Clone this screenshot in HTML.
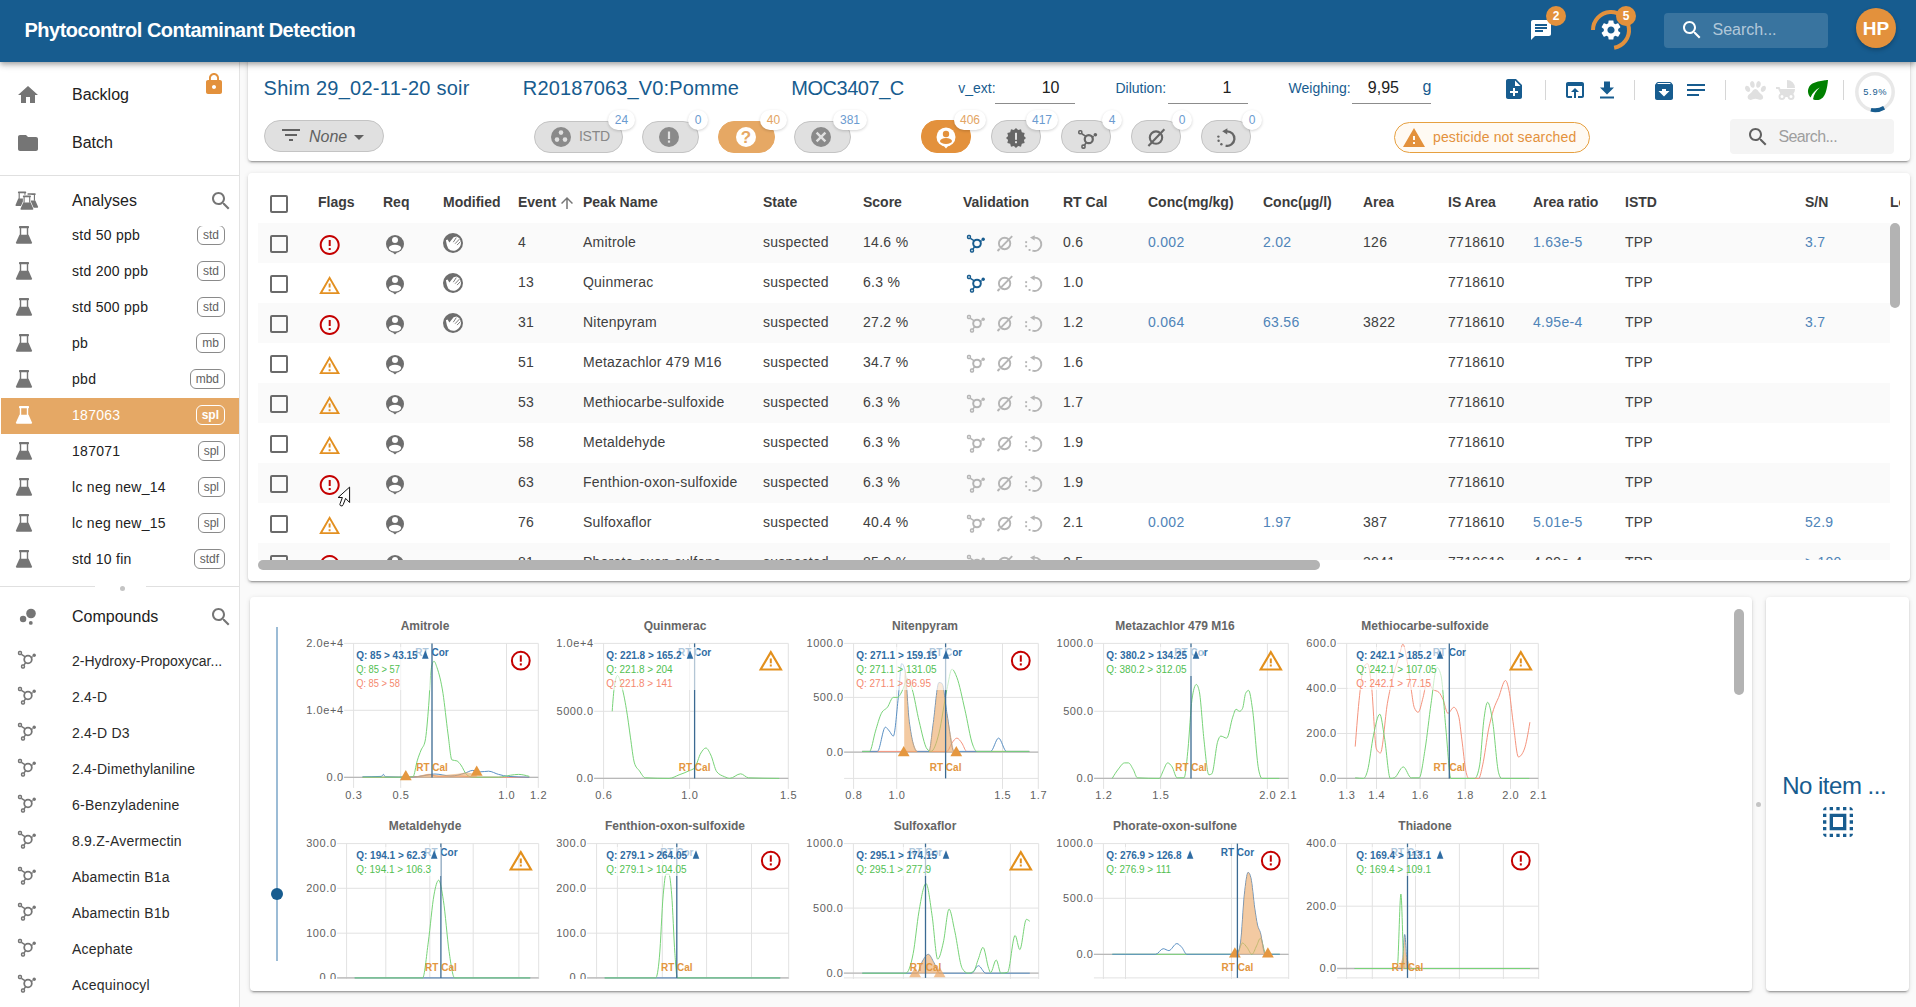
<!DOCTYPE html><html><head><meta charset="utf-8"><style>
*{box-sizing:border-box;margin:0;padding:0}
html,body{-webkit-font-smoothing:antialiased;width:1916px;height:1007px;overflow:hidden;background:#fafafa;font-family:"Liberation Sans",sans-serif;color:#212121}
.a{position:absolute}
.t{position:absolute;white-space:nowrap;line-height:1}
svg{position:absolute;overflow:visible}
.card{position:absolute;background:#fff;border-radius:4px;box-shadow:0 3px 1px -2px rgba(0,0,0,.2),0 2px 2px 0 rgba(0,0,0,.14),0 1px 5px 0 rgba(0,0,0,.12)}
.chip{position:absolute;height:20px;border:1px solid #8a8a8a;border-radius:6px;font-size:12px;line-height:18px;color:#616161;padding:0 5px;white-space:nowrap}
.pill{position:absolute;height:32px;border-radius:16px;background:#e0e0e0;border:1px solid #c4c4c4}
.badge{position:absolute;height:20px;min-width:20px;border-radius:10px;background:#fff;box-shadow:0 1px 3px rgba(0,0,0,.18);font-size:12px;line-height:20px;text-align:center;color:#6b9bd0;padding:0 6px}
</style></head><body>
<div class="card" style="left:248px;top:50px;width:1662px;height:111px"></div>
<div class="card" style="left:248px;top:173px;width:1662px;height:408px"></div>
<div class="card" style="left:250px;top:597px;width:1502px;height:394px"></div>
<div class="card" style="left:1766px;top:597px;width:143px;height:394px"></div>
<div class="a" style="left:0;top:62px;width:240px;height:945px;background:#fff;border-right:1px solid #e3e3e3"></div>
<svg style="left:16px;top:83px;" width="24" height="24" viewBox="0 0 24 24"><path fill="#757575" d="M10 20v-6h4v6h5v-8h3L12 3 2 12h3v8z"/></svg>
<div class="t" style="left:72.0px;top:87.36px;font-size:16px;color:#212121;font-weight:normal;">Backlog</div>
<svg style="left:16px;top:131px;" width="24" height="24" viewBox="0 0 24 24"><path fill="#757575" d="M10 4H4c-1.1 0-1.99.9-1.99 2L2 18c0 1.1.9 2 2 2h16c1.1 0 2-.9 2-2V8c0-1.1-.9-2-2-2h-8l-2-2z"/></svg>
<div class="t" style="left:72.0px;top:135.16px;font-size:16px;color:#212121;font-weight:normal;">Batch</div>
<svg style="left:202px;top:72px;" width="24" height="24" viewBox="0 0 24 24"><path fill="#e3913c" d="M18 8h-1V6c0-2.76-2.24-5-5-5S7 3.24 7 6v2H6c-1.1 0-2 .9-2 2v10c0 1.1.9 2 2 2h12c1.1 0 2-.9 2-2V10c0-1.1-.9-2-2-2zm-6 9c-1.1 0-2-.9-2-2s.9-2 2-2 2 .9 2 2-.9 2-2 2zm3.1-9H8.9V6c0-1.71 1.39-3.1 3.1-3.1 1.71 0 3.1 1.39 3.1 3.1v2z"/></svg>
<div class="a" style="left:0px;top:175px;width:239px;height:1px;background:#e0e0e0"></div>
<svg style="left:16px;top:191px;" width="24" height="20" viewBox="0 0 24 20"><g transform="translate(-0.5,0.4) scale(0.82)" fill="#757575"><rect x="3" y="0" width="10" height="2.2" rx="0.6"/><rect x="3.8" y="2" width="1.4" height="7.2"/><rect x="10.8" y="2" width="1.4" height="7.2"/><path d="M3.4 8.8H12.6L16 16.6Q16.3 17.8 15 17.8H1Q-0.3 17.8 0 16.6Z"/></g><g transform="translate(9,2.2) scale(0.82)" fill="#757575"><rect x="3" y="0" width="10" height="2.2" rx="0.6"/><rect x="3.8" y="2" width="1.4" height="7.2"/><rect x="10.8" y="2" width="1.4" height="7.2"/><path d="M3.4 8.8H12.6L16 16.6Q16.3 17.8 15 17.8H1Q-0.3 17.8 0 16.6Z"/></g><g transform="translate(4.5,4.4) scale(0.8)" stroke="#fff" stroke-width="1.6" fill="#fff"><rect x="3" y="0" width="10" height="2.2"/><rect x="3.8" y="2" width="8.4" height="7.2"/><path d="M3.4 8.8H12.6L16 16.6Q16.3 17.8 15 17.8H1Q-0.3 17.8 0 16.6Z"/></g><g transform="translate(4.5,4.4) scale(0.8)" fill="#757575"><rect x="3" y="0" width="10" height="2.2" rx="0.6"/><rect x="3.8" y="2" width="1.4" height="7.2"/><rect x="10.8" y="2" width="1.4" height="7.2"/><path d="M3.4 8.8H12.6L16 16.6Q16.3 17.8 15 17.8H1Q-0.3 17.8 0 16.6Z"/></g></svg>
<div class="t" style="left:72.0px;top:192.56px;font-size:16px;color:#212121;font-weight:normal;">Analyses</div>
<svg style="left:209px;top:189px;" width="24" height="24" viewBox="0 0 24 24"><path fill="#757575" d="M15.5 14h-.79l-.28-.27C15.41 12.59 16 11.11 16 9.5 16 5.91 13.09 3 9.5 3S3 5.91 3 9.5 5.91 16 9.5 16c1.61 0 3.09-.59 4.23-1.57l.27.28v.79l5 4.99L20.49 19l-4.99-5zm-6 0C7.01 14 5 11.99 5 9.5S7.01 5 9.5 5 14 7.01 14 9.5 11.99 14 9.5 14z"/></svg>
<div class="a" style="left:0;top:226px;width:239px;height:352px;overflow:hidden">
<svg style="left:16px;top:0px" width="16" height="18"><g transform="translate(0,0) scale(1.0)" fill="#757575"><rect x="3" y="0" width="10" height="2.2" rx="0.6"/><rect x="3.8" y="2" width="1.4" height="7.2"/><rect x="10.8" y="2" width="1.4" height="7.2"/><path d="M3.4 8.8H12.6L16 16.6Q16.3 17.8 15 17.8H1Q-0.3 17.8 0 16.6Z"/></g></svg>
<div class="t" style="left:72px;top:2.05px;font-size:14px;letter-spacing:0.28px;color:#212121;">std 50 ppb</div>
<div class="chip" style="right:14px;top:-1px;">std</div>
<svg style="left:16px;top:36px" width="16" height="18"><g transform="translate(0,0) scale(1.0)" fill="#757575"><rect x="3" y="0" width="10" height="2.2" rx="0.6"/><rect x="3.8" y="2" width="1.4" height="7.2"/><rect x="10.8" y="2" width="1.4" height="7.2"/><path d="M3.4 8.8H12.6L16 16.6Q16.3 17.8 15 17.8H1Q-0.3 17.8 0 16.6Z"/></g></svg>
<div class="t" style="left:72px;top:38.05px;font-size:14px;letter-spacing:0.28px;color:#212121;">std 200 ppb</div>
<div class="chip" style="right:14px;top:35px;">std</div>
<svg style="left:16px;top:72px" width="16" height="18"><g transform="translate(0,0) scale(1.0)" fill="#757575"><rect x="3" y="0" width="10" height="2.2" rx="0.6"/><rect x="3.8" y="2" width="1.4" height="7.2"/><rect x="10.8" y="2" width="1.4" height="7.2"/><path d="M3.4 8.8H12.6L16 16.6Q16.3 17.8 15 17.8H1Q-0.3 17.8 0 16.6Z"/></g></svg>
<div class="t" style="left:72px;top:74.05px;font-size:14px;letter-spacing:0.28px;color:#212121;">std 500 ppb</div>
<div class="chip" style="right:14px;top:71px;">std</div>
<svg style="left:16px;top:108px" width="16" height="18"><g transform="translate(0,0) scale(1.0)" fill="#757575"><rect x="3" y="0" width="10" height="2.2" rx="0.6"/><rect x="3.8" y="2" width="1.4" height="7.2"/><rect x="10.8" y="2" width="1.4" height="7.2"/><path d="M3.4 8.8H12.6L16 16.6Q16.3 17.8 15 17.8H1Q-0.3 17.8 0 16.6Z"/></g></svg>
<div class="t" style="left:72px;top:110.05px;font-size:14px;letter-spacing:0.28px;color:#212121;">pb</div>
<div class="chip" style="right:14px;top:107px;">mb</div>
<svg style="left:16px;top:144px" width="16" height="18"><g transform="translate(0,0) scale(1.0)" fill="#757575"><rect x="3" y="0" width="10" height="2.2" rx="0.6"/><rect x="3.8" y="2" width="1.4" height="7.2"/><rect x="10.8" y="2" width="1.4" height="7.2"/><path d="M3.4 8.8H12.6L16 16.6Q16.3 17.8 15 17.8H1Q-0.3 17.8 0 16.6Z"/></g></svg>
<div class="t" style="left:72px;top:146.05px;font-size:14px;letter-spacing:0.28px;color:#212121;">pbd</div>
<div class="chip" style="right:14px;top:143px;">mbd</div>
<div class="a" style="left:1px;top:172px;width:238px;height:36px;background:#e5a865"></div>
<svg style="left:16px;top:180px" width="16" height="18"><g transform="translate(0,0) scale(1.0)" fill="#fff"><rect x="3" y="0" width="10" height="2.2" rx="0.6"/><rect x="3.8" y="2" width="1.4" height="7.2"/><rect x="10.8" y="2" width="1.4" height="7.2"/><path d="M3.4 8.8H12.6L16 16.6Q16.3 17.8 15 17.8H1Q-0.3 17.8 0 16.6Z"/></g></svg>
<div class="t" style="left:72px;top:182.05px;font-size:14px;letter-spacing:0.28px;color:#fff;font-weight:normal">187063</div>
<div class="chip" style="right:14px;top:179px;border-color:#fff;color:#fff;font-weight:bold">spl</div>
<svg style="left:16px;top:216px" width="16" height="18"><g transform="translate(0,0) scale(1.0)" fill="#757575"><rect x="3" y="0" width="10" height="2.2" rx="0.6"/><rect x="3.8" y="2" width="1.4" height="7.2"/><rect x="10.8" y="2" width="1.4" height="7.2"/><path d="M3.4 8.8H12.6L16 16.6Q16.3 17.8 15 17.8H1Q-0.3 17.8 0 16.6Z"/></g></svg>
<div class="t" style="left:72px;top:218.05px;font-size:14px;letter-spacing:0.28px;color:#212121;">187071</div>
<div class="chip" style="right:14px;top:215px;">spl</div>
<svg style="left:16px;top:252px" width="16" height="18"><g transform="translate(0,0) scale(1.0)" fill="#757575"><rect x="3" y="0" width="10" height="2.2" rx="0.6"/><rect x="3.8" y="2" width="1.4" height="7.2"/><rect x="10.8" y="2" width="1.4" height="7.2"/><path d="M3.4 8.8H12.6L16 16.6Q16.3 17.8 15 17.8H1Q-0.3 17.8 0 16.6Z"/></g></svg>
<div class="t" style="left:72px;top:254.05px;font-size:14px;letter-spacing:0.28px;color:#212121;">lc neg new_14</div>
<div class="chip" style="right:14px;top:251px;">spl</div>
<svg style="left:16px;top:288px" width="16" height="18"><g transform="translate(0,0) scale(1.0)" fill="#757575"><rect x="3" y="0" width="10" height="2.2" rx="0.6"/><rect x="3.8" y="2" width="1.4" height="7.2"/><rect x="10.8" y="2" width="1.4" height="7.2"/><path d="M3.4 8.8H12.6L16 16.6Q16.3 17.8 15 17.8H1Q-0.3 17.8 0 16.6Z"/></g></svg>
<div class="t" style="left:72px;top:290.05px;font-size:14px;letter-spacing:0.28px;color:#212121;">lc neg new_15</div>
<div class="chip" style="right:14px;top:287px;">spl</div>
<svg style="left:16px;top:324px" width="16" height="18"><g transform="translate(0,0) scale(1.0)" fill="#757575"><rect x="3" y="0" width="10" height="2.2" rx="0.6"/><rect x="3.8" y="2" width="1.4" height="7.2"/><rect x="10.8" y="2" width="1.4" height="7.2"/><path d="M3.4 8.8H12.6L16 16.6Q16.3 17.8 15 17.8H1Q-0.3 17.8 0 16.6Z"/></g></svg>
<div class="t" style="left:72px;top:326.05px;font-size:14px;letter-spacing:0.28px;color:#212121;">std 10 fin</div>
<div class="chip" style="right:14px;top:323px;">stdf</div>
</div>
<div class="a" style="left:0px;top:586px;width:95px;height:1px;background:#e0e0e0"></div>
<div class="a" style="left:146px;top:586px;width:93px;height:1px;background:#e0e0e0"></div>
<div class="a" style="left:119.5px;top:586px;width:5px;height:5px;border-radius:50%;background:#c4c4c4"></div>
<svg style="left:16px;top:604px;" width="24" height="24" viewBox="0 0 24 24"><g fill="#757575"><circle cx="15" cy="9.5" r="4.8"/><circle cx="7.1" cy="15" r="3.2"/><circle cx="14.8" cy="18.9" r="1.9"/></g></svg>
<div class="t" style="left:72.0px;top:609.46px;font-size:16px;color:#212121;font-weight:normal;">Compounds</div>
<svg style="left:209px;top:605px;" width="24" height="24" viewBox="0 0 24 24"><path fill="#757575" d="M15.5 14h-.79l-.28-.27C15.41 12.59 16 11.11 16 9.5 16 5.91 13.09 3 9.5 3S3 5.91 3 9.5 5.91 16 9.5 16c1.61 0 3.09-.59 4.23-1.57l.27.28v.79l5 4.99L20.49 19l-4.99-5zm-6 0C7.01 14 5 11.99 5 9.5S7.01 5 9.5 5 14 7.01 14 9.5 11.99 14 9.5 14z"/></svg>
<svg style="left:15px;top:648px;" width="24" height="24" viewBox="0 0 24 24"><g transform="translate(0,0)" stroke="#757575" fill="none" stroke-width="1.8"><circle cx="13" cy="11.5" r="3.8"/><rect x="3.6" y="3.6" width="2.8" height="2.8" rx="0.9" stroke-width="1.5"/><rect x="6.6" y="17.1" width="2.8" height="2.8" rx="0.9" stroke-width="1.5"/><path d="M6.4 6.4L10.3 8.9M9 17.2L10.6 14.6M17.6 8.5L16 9.8" stroke-width="1.5"/><circle cx="19.2" cy="7.3" r="1.7" fill="#757575" stroke="none"/></g></svg>
<div class="t" style="left:72.0px;top:653.65px;font-size:14px;color:#2a2a2a;font-weight:normal;">2-Hydroxy-Propoxycar...</div>
<svg style="left:15px;top:684px;" width="24" height="24" viewBox="0 0 24 24"><g transform="translate(0,0)" stroke="#757575" fill="none" stroke-width="1.8"><circle cx="13" cy="11.5" r="3.8"/><rect x="3.6" y="3.6" width="2.8" height="2.8" rx="0.9" stroke-width="1.5"/><rect x="6.6" y="17.1" width="2.8" height="2.8" rx="0.9" stroke-width="1.5"/><path d="M6.4 6.4L10.3 8.9M9 17.2L10.6 14.6M17.6 8.5L16 9.8" stroke-width="1.5"/><circle cx="19.2" cy="7.3" r="1.7" fill="#757575" stroke="none"/></g></svg>
<div class="t" style="left:72.0px;top:689.65px;font-size:14px;color:#2a2a2a;font-weight:normal;letter-spacing:0.22px;">2.4-D</div>
<svg style="left:15px;top:720px;" width="24" height="24" viewBox="0 0 24 24"><g transform="translate(0,0)" stroke="#757575" fill="none" stroke-width="1.8"><circle cx="13" cy="11.5" r="3.8"/><rect x="3.6" y="3.6" width="2.8" height="2.8" rx="0.9" stroke-width="1.5"/><rect x="6.6" y="17.1" width="2.8" height="2.8" rx="0.9" stroke-width="1.5"/><path d="M6.4 6.4L10.3 8.9M9 17.2L10.6 14.6M17.6 8.5L16 9.8" stroke-width="1.5"/><circle cx="19.2" cy="7.3" r="1.7" fill="#757575" stroke="none"/></g></svg>
<div class="t" style="left:72.0px;top:725.65px;font-size:14px;color:#2a2a2a;font-weight:normal;letter-spacing:0.22px;">2.4-D D3</div>
<svg style="left:15px;top:756px;" width="24" height="24" viewBox="0 0 24 24"><g transform="translate(0,0)" stroke="#757575" fill="none" stroke-width="1.8"><circle cx="13" cy="11.5" r="3.8"/><rect x="3.6" y="3.6" width="2.8" height="2.8" rx="0.9" stroke-width="1.5"/><rect x="6.6" y="17.1" width="2.8" height="2.8" rx="0.9" stroke-width="1.5"/><path d="M6.4 6.4L10.3 8.9M9 17.2L10.6 14.6M17.6 8.5L16 9.8" stroke-width="1.5"/><circle cx="19.2" cy="7.3" r="1.7" fill="#757575" stroke="none"/></g></svg>
<div class="t" style="left:72.0px;top:761.65px;font-size:14px;color:#2a2a2a;font-weight:normal;letter-spacing:0.22px;">2.4-Dimethylaniline</div>
<svg style="left:15px;top:792px;" width="24" height="24" viewBox="0 0 24 24"><g transform="translate(0,0)" stroke="#757575" fill="none" stroke-width="1.8"><circle cx="13" cy="11.5" r="3.8"/><rect x="3.6" y="3.6" width="2.8" height="2.8" rx="0.9" stroke-width="1.5"/><rect x="6.6" y="17.1" width="2.8" height="2.8" rx="0.9" stroke-width="1.5"/><path d="M6.4 6.4L10.3 8.9M9 17.2L10.6 14.6M17.6 8.5L16 9.8" stroke-width="1.5"/><circle cx="19.2" cy="7.3" r="1.7" fill="#757575" stroke="none"/></g></svg>
<div class="t" style="left:72.0px;top:797.65px;font-size:14px;color:#2a2a2a;font-weight:normal;letter-spacing:0.22px;">6-Benzyladenine</div>
<svg style="left:15px;top:828px;" width="24" height="24" viewBox="0 0 24 24"><g transform="translate(0,0)" stroke="#757575" fill="none" stroke-width="1.8"><circle cx="13" cy="11.5" r="3.8"/><rect x="3.6" y="3.6" width="2.8" height="2.8" rx="0.9" stroke-width="1.5"/><rect x="6.6" y="17.1" width="2.8" height="2.8" rx="0.9" stroke-width="1.5"/><path d="M6.4 6.4L10.3 8.9M9 17.2L10.6 14.6M17.6 8.5L16 9.8" stroke-width="1.5"/><circle cx="19.2" cy="7.3" r="1.7" fill="#757575" stroke="none"/></g></svg>
<div class="t" style="left:72.0px;top:833.65px;font-size:14px;color:#2a2a2a;font-weight:normal;letter-spacing:0.22px;">8.9.Z-Avermectin</div>
<svg style="left:15px;top:864px;" width="24" height="24" viewBox="0 0 24 24"><g transform="translate(0,0)" stroke="#757575" fill="none" stroke-width="1.8"><circle cx="13" cy="11.5" r="3.8"/><rect x="3.6" y="3.6" width="2.8" height="2.8" rx="0.9" stroke-width="1.5"/><rect x="6.6" y="17.1" width="2.8" height="2.8" rx="0.9" stroke-width="1.5"/><path d="M6.4 6.4L10.3 8.9M9 17.2L10.6 14.6M17.6 8.5L16 9.8" stroke-width="1.5"/><circle cx="19.2" cy="7.3" r="1.7" fill="#757575" stroke="none"/></g></svg>
<div class="t" style="left:72.0px;top:869.65px;font-size:14px;color:#2a2a2a;font-weight:normal;letter-spacing:0.22px;">Abamectin B1a</div>
<svg style="left:15px;top:900px;" width="24" height="24" viewBox="0 0 24 24"><g transform="translate(0,0)" stroke="#757575" fill="none" stroke-width="1.8"><circle cx="13" cy="11.5" r="3.8"/><rect x="3.6" y="3.6" width="2.8" height="2.8" rx="0.9" stroke-width="1.5"/><rect x="6.6" y="17.1" width="2.8" height="2.8" rx="0.9" stroke-width="1.5"/><path d="M6.4 6.4L10.3 8.9M9 17.2L10.6 14.6M17.6 8.5L16 9.8" stroke-width="1.5"/><circle cx="19.2" cy="7.3" r="1.7" fill="#757575" stroke="none"/></g></svg>
<div class="t" style="left:72.0px;top:905.65px;font-size:14px;color:#2a2a2a;font-weight:normal;letter-spacing:0.22px;">Abamectin B1b</div>
<svg style="left:15px;top:936px;" width="24" height="24" viewBox="0 0 24 24"><g transform="translate(0,0)" stroke="#757575" fill="none" stroke-width="1.8"><circle cx="13" cy="11.5" r="3.8"/><rect x="3.6" y="3.6" width="2.8" height="2.8" rx="0.9" stroke-width="1.5"/><rect x="6.6" y="17.1" width="2.8" height="2.8" rx="0.9" stroke-width="1.5"/><path d="M6.4 6.4L10.3 8.9M9 17.2L10.6 14.6M17.6 8.5L16 9.8" stroke-width="1.5"/><circle cx="19.2" cy="7.3" r="1.7" fill="#757575" stroke="none"/></g></svg>
<div class="t" style="left:72.0px;top:941.65px;font-size:14px;color:#2a2a2a;font-weight:normal;letter-spacing:0.22px;">Acephate</div>
<svg style="left:15px;top:972px;" width="24" height="24" viewBox="0 0 24 24"><g transform="translate(0,0)" stroke="#757575" fill="none" stroke-width="1.8"><circle cx="13" cy="11.5" r="3.8"/><rect x="3.6" y="3.6" width="2.8" height="2.8" rx="0.9" stroke-width="1.5"/><rect x="6.6" y="17.1" width="2.8" height="2.8" rx="0.9" stroke-width="1.5"/><path d="M6.4 6.4L10.3 8.9M9 17.2L10.6 14.6M17.6 8.5L16 9.8" stroke-width="1.5"/><circle cx="19.2" cy="7.3" r="1.7" fill="#757575" stroke="none"/></g></svg>
<div class="t" style="left:72.0px;top:977.65px;font-size:14px;color:#2a2a2a;font-weight:normal;letter-spacing:0.22px;">Acequinocyl</div>
<div class="a" style="left:0;top:0;width:1916px;height:62px;background:#175c8f;box-shadow:0 2px 4px -1px rgba(0,0,0,.2),0 4px 5px 0 rgba(0,0,0,.14),0 1px 10px 0 rgba(0,0,0,.12)"></div>
<div class="t" style="left:24.5px;top:19.97px;font-size:20px;color:#fff;font-weight:bold;letter-spacing:-0.5px;">Phytocontrol Contaminant Detection</div>
<svg style="left:1529px;top:18px;" width="24" height="24" viewBox="0 0 24 24"><path fill="#fff" d="M20 2H4c-1.1 0-1.99.9-1.99 2L2 22l4-4h14c1.1 0 2-.9 2-2V4c0-1.1-.9-2-2-2zM6 9h12v2H6V9zm8 5H6v-2h8v2zm4-6H6V6h12v2z"/></svg>
<div class="a" style="left:1546px;top:6px;width:20px;height:20px;border-radius:50%;background:#e3913c;color:#fff;font-size:12px;font-weight:bold;line-height:20px;text-align:center">2</div>
<svg style="left:1599px;top:18px;" width="24" height="24" viewBox="0 0 24 24"><path fill="#fff" d="M19.14,12.94c0.04-0.3,0.06-0.61,0.06-0.94c0-0.32-0.02-0.64-0.07-0.94l2.03-1.58c0.18-0.14,0.23-0.41,0.12-0.61l-1.92-3.32c-0.12-0.22-0.37-0.29-0.59-0.22l-2.39,0.96c-0.5-0.38-1.03-0.7-1.62-0.94L14.4,2.81c-0.04-0.24-0.24-0.41-0.48-0.41h-3.84c-0.24,0-0.43,0.17-0.47,0.41L9.25,5.35C8.66,5.59,8.12,5.92,7.63,6.29L5.24,5.33c-0.22-0.08-0.47,0-0.59,0.22L2.74,8.87C2.62,9.08,2.66,9.34,2.86,9.48l2.03,1.58C4.84,11.36,4.8,11.69,4.8,12s0.02,0.64,0.07,0.94l-2.03,1.58c-0.18,0.14-0.23,0.41-0.12,0.61l1.92,3.32c0.12,0.22,0.37,0.29,0.59,0.22l2.39-0.96c0.5,0.38,1.03,0.7,1.62,0.94l0.36,2.54c0.05,0.24,0.24,0.41,0.48,0.41h3.84c0.24,0,0.44-0.17,0.47-0.41l0.36-2.54c0.59-0.24,1.13-0.56,1.62-0.94l2.39,0.96c0.22,0.08,0.47,0,0.59-0.22l1.92-3.32c0.12-0.22,0.07-0.47-0.12-0.61L19.14,12.94z M12,15.6c-1.98,0-3.6-1.62-3.6-3.6s1.62-3.6,3.6-3.6s3.6,1.62,3.6,3.6S13.98,15.6,12,15.6z"/></svg>
<svg style="left:1591px;top:10px;" width="40" height="40" viewBox="0 0 40 40"><path d="M2.00 20.00A18 18 0 1 1 23.13 37.73" stroke="#e3913c" stroke-width="4" fill="none"/></svg>
<div class="a" style="left:1616px;top:6px;width:20px;height:20px;border-radius:50%;background:#e3913c;color:#fff;font-size:12px;font-weight:bold;line-height:20px;text-align:center">5</div>
<div class="a" style="left:1664px;top:13px;width:164px;height:35px;border-radius:4px;background:rgba(255,255,255,.15)"></div>
<svg style="left:1680px;top:18px;" width="24" height="24" viewBox="0 0 24 24"><path fill="#fff" d="M15.5 14h-.79l-.28-.27C15.41 12.59 16 11.11 16 9.5 16 5.91 13.09 3 9.5 3S3 5.91 3 9.5 5.91 16 9.5 16c1.61 0 3.09-.59 4.23-1.57l.27.28v.79l5 4.99L20.49 19l-4.99-5zm-6 0C7.01 14 5 11.99 5 9.5S7.01 5 9.5 5 14 7.01 14 9.5 11.99 14 9.5 14z"/></svg>
<div class="t" style="left:1712.5px;top:22.46px;font-size:16px;color:rgba(255,255,255,.62);font-weight:normal;">Search...</div>
<div class="a" style="left:1856px;top:8px;width:40px;height:40px;border-radius:50%;background:#e3913c;box-shadow:0 2px 4px rgba(0,0,0,.25)"></div>
<div class="t" style="left:1576.0px;width:600px;text-align:center;top:19.22px;font-size:19px;color:#fff;font-weight:bold;">HP</div>
<div class="t" style="left:263.6px;top:77.77px;font-size:20px;color:#175c8f;font-weight:normal;letter-spacing:0.25px;">Shim 29_02-11-20 soir</div>
<div class="t" style="left:522.8px;top:77.77px;font-size:20px;color:#175c8f;font-weight:normal;letter-spacing:0.15px;">R20187063_V0:Pomme</div>
<div class="t" style="left:791.2px;top:77.77px;font-size:20px;color:#175c8f;font-weight:normal;letter-spacing:-0.45px;">MOC3407_C</div>
<div class="t" style="left:958.2px;top:80.85px;font-size:14px;color:#175c8f;font-weight:normal;">v_ext:</div>
<div class="a" style="left:995px;top:103px;width:80px;height:1px;background:#8c8c8c"></div>
<div class="t" style="right:856.5px;top:79.76px;font-size:16px;color:#212121;font-weight:normal;">10</div>
<div class="t" style="left:1115.5px;top:80.85px;font-size:14px;color:#175c8f;font-weight:normal;">Dilution:</div>
<div class="a" style="left:1168px;top:103px;width:80px;height:1px;background:#8c8c8c"></div>
<div class="t" style="right:684.5px;top:79.76px;font-size:16px;color:#212121;font-weight:normal;">1</div>
<div class="t" style="left:1288.6px;top:80.85px;font-size:14px;color:#175c8f;font-weight:normal;">Weighing:</div>
<div class="a" style="left:1352px;top:103px;width:79px;height:1px;background:#8c8c8c"></div>
<div class="t" style="right:517.0px;top:79.76px;font-size:16px;color:#212121;font-weight:normal;">9,95</div>
<div class="t" style="left:1422.5px;top:79.16px;font-size:16px;color:#175c8f;font-weight:normal;">g</div>
<svg style="left:1502px;top:77px;" width="24" height="24" viewBox="0 0 24 24"><path fill="#175c8f" d="M14 2H6c-1.1 0-1.99.9-1.99 2L4 20c0 1.1.89 2 1.99 2H18c1.1 0 2-.9 2-2V8l-6-6zm2 14h-3v3h-2v-3H8v-2h3v-3h2v3h3v2zm-3-7V3.5L18.5 9H13z"/></svg>
<div class="a" style="left:1545px;top:80px;width:1px;height:20px;background:#d6d6d6"></div>
<svg style="left:1563px;top:78px;" width="24" height="24" viewBox="0 0 24 24"><path fill="#175c8f" d="M19 4H5c-1.11 0-2 .9-2 2v12c0 1.1.89 2 2 2h4v-2H5V8h14v10h-4v2h4c1.1 0 2-.9 2-2V6c0-1.1-.89-2-2-2zm-7 6l-4 4h3v6h2v-6h3l-4-4z"/></svg>
<svg style="left:1595px;top:78px;" width="24" height="24" viewBox="0 0 24 24"><path fill="#175c8f" d="M5,20H19V18H5M19,9H15V3H9V9H5L12,16L19,9Z" transform="translate(0,0.6)"/></svg>
<div class="a" style="left:1634px;top:80px;width:1px;height:20px;background:#d6d6d6"></div>
<svg style="left:1652px;top:79px;" width="24" height="24" viewBox="0 0 24 24"><path fill="#175c8f" d="M20.54 5.23l-1.39-1.68C18.88 3.21 18.47 3 18 3H6c-.47 0-.88.21-1.16.55L3.46 5.23C3.17 5.57 3 6.02 3 6.5V19c0 1.1.9 2 2 2h14c1.1 0 2-.9 2-2V6.5c0-.48-.17-.93-.46-1.27zM12 17.5L6.5 12H10v-2h4v2h3.5L12 17.5zM5.12 5l.81-1h12l.94 1H5.12z"/></svg>
<svg style="left:1684px;top:78px;" width="24" height="24" viewBox="0 0 24 24"><path fill="#175c8f" d="M3 18h12v-2H3v2zM3 6v2h18V6H3zm0 7h18v-2H3v2z"/></svg>
<div class="a" style="left:1725px;top:80px;width:1px;height:20px;background:#d6d6d6"></div>
<svg style="left:1742.5px;top:78px;" width="25" height="25" viewBox="0 0 24 24"><path fill="#e0e0e0" d="M8.35,3C9.53,2.83 10.78,4.12 11.14,5.9C11.5,7.67 10.85,9.25 9.67,9.43C8.5,9.61 7.24,8.32 6.87,6.54C6.5,4.77 7.17,3.19 8.35,3M15.5,3C16.69,3.19 17.35,4.77 17,6.54C16.62,8.32 15.37,9.61 14.19,9.43C13,9.25 12.35,7.67 12.72,5.9C13.08,4.12 14.33,2.83 15.5,3M3,7.6C4.14,7.11 5.69,8 6.5,9.55C7.26,11.13 7,12.79 5.87,13.28C4.74,13.77 3.2,12.89 2.41,11.32C1.62,9.75 1.9,8.08 3,7.6M21,7.6C22.1,8.08 22.38,9.75 21.59,11.32C20.8,12.89 19.26,13.77 18.13,13.28C17,12.79 16.74,11.13 17.5,9.55C18.31,8 19.86,7.11 21,7.6M19.33,18.38C19.37,19.32 18.65,20.36 17.79,20.75C16,21.57 13.88,19.87 11.89,19.87C9.9,19.87 7.76,21.64 6,20.75C5,20.26 4.31,18.96 4.44,17.88C4.62,16.39 6.41,15.59 7.47,14.5C8.88,13.09 9.88,10.44 11.89,10.44C13.89,10.44 14.95,13.05 16.3,14.5C17.41,15.72 19.26,16.75 19.33,18.38Z"/></svg>
<svg style="left:1774px;top:78px;" width="24" height="24" viewBox="0 0 24 24"><path fill="#e0e0e0" d="M13,2V10H21A8,8 0 0,0 13,2M19.32,15.89C20.37,14.54 21,12.84 21,11H6.44L5.5,9H2V11H4.22C4.22,11 6.11,15.07 6.34,15.42C5.24,16 4.5,17.17 4.5,18.5A3.5,3.5 0 0,0 8,22C9.76,22 11.22,20.7 11.46,19H13.54C13.78,20.7 15.24,22 17,22A3.5,3.5 0 0,0 20.5,18.5C20.5,17.46 20.04,16.53 19.32,15.89M8,20A1.5,1.5 0 0,1 6.5,18.5A1.5,1.5 0 0,1 8,17A1.5,1.5 0 0,1 9.5,18.5A1.5,1.5 0 0,1 8,20M17,20A1.5,1.5 0 0,1 15.5,18.5A1.5,1.5 0 0,1 17,17A1.5,1.5 0 0,1 18.5,18.5A1.5,1.5 0 0,1 17,20Z"/></svg>
<svg style="left:1803px;top:75px;" width="30" height="30" viewBox="0 0 24 24"><path fill="#008000" d="M6.05 8.05c-2.73 2.73-2.73 7.15-.02 9.88 1.47-3.4 4.09-6.24 7.36-7.93-2.77 2.34-4.71 5.61-5.39 9.32 2.6 1.23 5.8.78 7.95-1.37C19.43 14.47 20 4 20 4S9.53 4.57 6.05 8.05z"/></svg>
<div class="a" style="left:1843px;top:80px;width:1px;height:20px;background:#d6d6d6"></div>
<svg style="left:1855px;top:72px;" width="40" height="40" viewBox="0 0 40 40"><circle cx="20" cy="20" r="18.2" stroke="#e8e8e8" stroke-width="3.5" fill="none"/><path d="M29.10 35.76A18.2 18.2 0 0 1 15.91 37.73" stroke="#175c8f" stroke-width="3.8" fill="none"/></svg>
<div class="t" style="left:1575.3px;width:600px;text-align:center;top:88.33px;font-size:9.3px;color:#175c8f;font-weight:normal;letter-spacing:0.75px;">5.9%</div>
<div class="pill" style="left:264px;top:120px;width:120px;height:32px"></div>
<svg style="left:279px;top:123px;" width="24" height="24" viewBox="0 0 24 24"><path fill="#616161" d="M10 18h4v-2h-4v2zM3 6v2h18V6H3zm3 7h12v-2H6v2z"/></svg>
<div class="t" style="left:309.0px;top:129.06px;font-size:16px;color:#616161;font-weight:normal;font-style:italic;">None</div>
<svg style="left:347px;top:125px;" width="24" height="24" viewBox="0 0 24 24"><path fill="#616161" d="M7 10l5 5 5-5z"/></svg>
<div class="pill" style="left:534px;top:121px;width:89px;height:32px;background:#e0e0e0;border-color:#c4c4c4"></div>
<svg style="left:551px;top:127px;" width="20" height="20" viewBox="0 0 20 20"><circle cx="10" cy="10" r="10" fill="#8a8a8a"/><circle cx="10" cy="5.6" r="2.3" fill="#e0e0e0"/><circle cx="6" cy="12.6" r="2.3" fill="#e0e0e0"/><circle cx="14" cy="12.6" r="2.3" fill="#e0e0e0"/></svg>
<div class="t" style="left:579.0px;top:129.05px;font-size:14px;color:#888;font-weight:normal;letter-spacing:-0.3px;">ISTD</div>
<div class="badge" style="left:608px;top:110px;width:27px;padding:0;color:#6b9bd0">24</div>
<div class="pill" style="left:642px;top:121px;width:57px;height:32px;background:#e0e0e0;border-color:#c4c4c4"></div>
<svg style="left:659px;top:127px;" width="20" height="20" viewBox="0 0 20 20"><circle cx="10" cy="10" r="10" fill="#8a8a8a"/><rect x="8.9" y="4.5" width="2.2" height="7.5" fill="#e0e0e0"/><rect x="8.9" y="13.5" width="2.2" height="2.2" fill="#e0e0e0"/></svg>
<div class="badge" style="left:688px;top:110px;width:20px;padding:0;color:#6b9bd0">0</div>
<div class="pill" style="left:718px;top:121px;width:57px;height:32px;background:#e6a864;border-color:#e6a864"></div>
<svg style="left:736px;top:127px;" width="20" height="20" viewBox="0 0 20 20"><circle cx="10" cy="10" r="10" fill="#fff"/><text x="10" y="16" font-family="Liberation Sans" font-weight="bold" font-size="17" text-anchor="middle" fill="#e6a864">?</text></svg>
<div class="badge" style="left:760px;top:110px;width:27px;padding:0;color:#e3a565">40</div>
<div class="pill" style="left:794px;top:121px;width:57px;height:32px;background:#e0e0e0;border-color:#c4c4c4"></div>
<svg style="left:811px;top:127px;" width="20" height="20" viewBox="0 0 20 20"><circle cx="10" cy="10" r="10" fill="#8a8a8a"/><path d="M5.6 5.6L14.4 14.4M14.4 5.6L5.6 14.4" stroke="#e0e0e0" stroke-width="2.4"/></svg>
<div class="badge" style="left:833px;top:110px;width:34px;padding:0;color:#6b9bd0">381</div>
<div class="pill" style="left:921px;top:120px;width:50px;height:33px;background:#e3913c;border-color:#e3913c"></div>
<svg style="left:936px;top:127px;" width="20" height="22" viewBox="0 0 20 22"><circle cx="10" cy="10" r="9.5" fill="#fff"/><circle cx="10" cy="7" r="3.2" fill="#e3913c"/><ellipse cx="10" cy="14" rx="6" ry="3" fill="#e3913c"/><path d="M7.5 18.5L10 21.5L12.5 18.5Z" fill="#fff"/></svg>
<div class="badge" style="left:954px;top:110px;width:32px;padding:0;color:#e3a565">406</div>
<div class="pill" style="left:991px;top:120px;width:50px;height:33px;background:#e0e0e0;border-color:#c4c4c4"></div>
<svg style="left:1006px;top:128px;" width="20" height="20" viewBox="0 0 20 20"><polygon points="20.00,10.00 17.92,12.12 18.66,15.00 15.80,15.80 15.00,18.66 12.12,17.92 10.00,20.00 7.88,17.92 5.00,18.66 4.20,15.80 1.34,15.00 2.08,12.12 0.00,10.00 2.08,7.88 1.34,5.00 4.20,4.20 5.00,1.34 7.88,2.08 10.00,0.00 12.12,2.08 15.00,1.34 15.80,4.20 18.66,5.00 17.92,7.88" fill="#666"/><rect x="9" y="4.8" width="2" height="7" fill="#e0e0e0"/><rect x="9" y="13.2" width="2" height="2" fill="#e0e0e0"/></svg>
<div class="badge" style="left:1026px;top:110px;width:32px;padding:0;color:#6b9bd0">417</div>
<div class="pill" style="left:1061px;top:120px;width:50px;height:33px;background:#e0e0e0;border-color:#c4c4c4"></div>
<svg style="left:1074px;top:126px;" width="24" height="24" viewBox="0 0 24 24"><g transform="translate(1,1) scale(1.06)"><g transform="translate(0,0)" stroke="#666" fill="none" stroke-width="2.1"><circle cx="13" cy="11.5" r="3.8"/><rect x="3.6" y="3.6" width="2.8" height="2.8" rx="0.9" stroke-width="1.5"/><rect x="6.6" y="17.1" width="2.8" height="2.8" rx="0.9" stroke-width="1.5"/><path d="M6.4 6.4L10.3 8.9M9 17.2L10.6 14.6M17.6 8.5L16 9.8" stroke-width="1.5"/><circle cx="19.2" cy="7.3" r="1.7" fill="#666" stroke="none"/></g></g></svg>
<div class="badge" style="left:1102px;top:110px;width:20px;padding:0;color:#6b9bd0">4</div>
<div class="pill" style="left:1131px;top:120px;width:50px;height:33px;background:#e0e0e0;border-color:#c4c4c4"></div>
<svg style="left:1147px;top:128px;" width="20" height="20" viewBox="0 0 20 20"><g stroke="#666" stroke-width="2.1" fill="none"><circle cx="9" cy="9.6" r="6.2"/><path d="M1.4 18L17.4 1.2"/></g></svg>
<div class="badge" style="left:1172px;top:110px;width:20px;padding:0;color:#6b9bd0">0</div>
<div class="pill" style="left:1201px;top:120px;width:50px;height:33px;background:#e0e0e0;border-color:#c4c4c4"></div>
<svg style="left:1216px;top:128px;" width="20" height="20" viewBox="0 0 20 20"><g fill="none" stroke="#666" stroke-width="2.3"><path d="M10.8 3.4A7.2 7.2 0 1 1 9.6 17.6"/></g><path d="M6.2 3.2L11.4 0.2L11.2 6.6Z" fill="#666"/><circle cx="2.4" cy="8.6" r="1.2" fill="#666"/><circle cx="2.6" cy="12.8" r="1.2" fill="#666"/><circle cx="5.4" cy="16.2" r="1.2" fill="#666"/></svg>
<div class="badge" style="left:1242px;top:110px;width:20px;padding:0;color:#6b9bd0">0</div>
<div class="a" style="left:1394px;top:122px;width:196px;height:31px;border-radius:16px;border:1px solid #e6a040;background:#fffaf3"></div>
<svg style="left:1402px;top:126px;" width="24" height="24" viewBox="0 0 24 24"><path fill="#e3913c" d="M1 21h22L12 2 1 21zm12-3h-2v-2h2v2zm0-4h-2v-4h2v4z"/></svg>
<div class="t" style="left:1433.0px;top:130.15px;font-size:14px;color:#e3913c;font-weight:normal;letter-spacing:0.15px;">pesticide not searched</div>
<div class="a" style="left:1730px;top:119px;width:164px;height:35px;border-radius:4px;background:#f4f4f4"></div>
<svg style="left:1746px;top:125px;" width="24" height="24" viewBox="0 0 24 24"><path fill="#616161" d="M15.5 14h-.79l-.28-.27C15.41 12.59 16 11.11 16 9.5 16 5.91 13.09 3 9.5 3S3 5.91 3 9.5 5.91 16 9.5 16c1.61 0 3.09-.59 4.23-1.57l.27.28v.79l5 4.99L20.49 19l-4.99-5zm-6 0C7.01 14 5 11.99 5 9.5S7.01 5 9.5 5 14 7.01 14 9.5 11.99 14 9.5 14z"/></svg>
<div class="t" style="left:1778.4px;top:128.56px;font-size:16px;color:#9e9e9e;font-weight:normal;letter-spacing:-0.6px;">Search...</div>
<div class="a" style="left:270px;top:195px;width:18px;height:18px;border:2px solid #6a6a6a;border-radius:2px"></div>
<div class="t" style="left:318.0px;top:194.85px;font-size:14px;color:#3c3c3c;font-weight:bold;">Flags</div>
<div class="t" style="left:383.0px;top:194.85px;font-size:14px;color:#3c3c3c;font-weight:bold;">Req</div>
<div class="t" style="left:443.0px;top:194.85px;font-size:14px;color:#3c3c3c;font-weight:bold;">Modified</div>
<div class="t" style="left:518.0px;top:194.85px;font-size:14px;color:#3c3c3c;font-weight:bold;">Event</div>
<div class="t" style="left:583.0px;top:194.85px;font-size:14px;color:#3c3c3c;font-weight:bold;">Peak Name</div>
<div class="t" style="left:763.0px;top:194.85px;font-size:14px;color:#3c3c3c;font-weight:bold;">State</div>
<div class="t" style="left:863.0px;top:194.85px;font-size:14px;color:#3c3c3c;font-weight:bold;">Score</div>
<div class="t" style="left:963.0px;top:194.85px;font-size:14px;color:#3c3c3c;font-weight:bold;">Validation</div>
<div class="t" style="left:1063.0px;top:194.85px;font-size:14px;color:#3c3c3c;font-weight:bold;">RT Cal</div>
<div class="t" style="left:1148.0px;top:194.85px;font-size:14px;color:#3c3c3c;font-weight:bold;">Conc(mg/kg)</div>
<div class="t" style="left:1263.0px;top:194.85px;font-size:14px;color:#3c3c3c;font-weight:bold;">Conc(µg/l)</div>
<div class="t" style="left:1363.0px;top:194.85px;font-size:14px;color:#3c3c3c;font-weight:bold;">Area</div>
<div class="t" style="left:1448.0px;top:194.85px;font-size:14px;color:#3c3c3c;font-weight:bold;">IS Area</div>
<div class="t" style="left:1533.0px;top:194.85px;font-size:14px;color:#3c3c3c;font-weight:bold;">Area ratio</div>
<div class="t" style="left:1625.0px;top:194.85px;font-size:14px;color:#3c3c3c;font-weight:bold;">ISTD</div>
<div class="t" style="left:1805.0px;top:194.85px;font-size:14px;color:#3c3c3c;font-weight:bold;">S/N</div>
<div class="a" style="left:1890px;top:190px;width:10px;height:22px;overflow:hidden"><div class="t" style="left:0;top:194.85px;font-size:14px;font-weight:bold;color:#3c3c3c;top:4.85px">Lo</div></div>
<svg style="left:558px;top:194px;" width="18" height="18" viewBox="0 0 24 24"><path fill="#757575" d="M4 12l1.41 1.41L11 7.83V20h2V7.83l5.58 5.59L20 12l-8-8-8 8z"/></svg>
<div class="a" style="left:248px;top:223px;width:1662px;height:337px;overflow:hidden">
<div class="a" style="left:10px;top:0px;width:1632px;height:40px;background:#fafafa"></div>
<div class="a" style="left:22px;top:12px;width:18px;height:18px;border:2px solid #6a6a6a;border-radius:2px"></div>
<div class="t" style="left:270.0px;top:11.95px;font-size:14px;color:#404040;letter-spacing:0.3px">4</div>
<div class="t" style="left:335.0px;top:11.95px;font-size:14px;color:#404040;letter-spacing:0.22px">Amitrole</div>
<div class="t" style="left:515.0px;top:11.95px;font-size:14px;color:#404040;letter-spacing:0.22px">suspected</div>
<div class="t" style="left:615.0px;top:11.95px;font-size:14px;color:#404040;letter-spacing:0.3px">14.6 %</div>
<div class="t" style="left:815.0px;top:11.95px;font-size:14px;color:#404040;letter-spacing:0.3px">0.6</div>
<div class="t" style="left:900.0px;top:11.95px;font-size:14px;color:#4f84b8;letter-spacing:0.3px">0.002</div>
<div class="t" style="left:1015.0px;top:11.95px;font-size:14px;color:#4f84b8;letter-spacing:0.3px">2.02</div>
<div class="t" style="left:1115.0px;top:11.95px;font-size:14px;color:#404040;letter-spacing:0.3px">126</div>
<div class="t" style="left:1200.0px;top:11.95px;font-size:14px;color:#404040;letter-spacing:0.3px">7718610</div>
<div class="t" style="left:1285.0px;top:11.95px;font-size:14px;color:#4f84b8;letter-spacing:0.3px">1.63e-5</div>
<div class="t" style="left:1377.0px;top:11.95px;font-size:14px;color:#404040;letter-spacing:0.22px">TPP</div>
<div class="t" style="left:1557.0px;top:11.95px;font-size:14px;color:#4f84b8;letter-spacing:0.3px">3.7</div>
<div class="a" style="left:22px;top:52px;width:18px;height:18px;border:2px solid #6a6a6a;border-radius:2px"></div>
<div class="t" style="left:270.0px;top:51.95px;font-size:14px;color:#404040;letter-spacing:0.3px">13</div>
<div class="t" style="left:335.0px;top:51.95px;font-size:14px;color:#404040;letter-spacing:0.22px">Quinmerac</div>
<div class="t" style="left:515.0px;top:51.95px;font-size:14px;color:#404040;letter-spacing:0.22px">suspected</div>
<div class="t" style="left:615.0px;top:51.95px;font-size:14px;color:#404040;letter-spacing:0.3px">6.3 %</div>
<div class="t" style="left:815.0px;top:51.95px;font-size:14px;color:#404040;letter-spacing:0.3px">1.0</div>
<div class="t" style="left:1200.0px;top:51.95px;font-size:14px;color:#404040;letter-spacing:0.3px">7718610</div>
<div class="t" style="left:1377.0px;top:51.95px;font-size:14px;color:#404040;letter-spacing:0.22px">TPP</div>
<div class="a" style="left:10px;top:80px;width:1632px;height:40px;background:#fafafa"></div>
<div class="a" style="left:22px;top:92px;width:18px;height:18px;border:2px solid #6a6a6a;border-radius:2px"></div>
<div class="t" style="left:270.0px;top:91.95px;font-size:14px;color:#404040;letter-spacing:0.3px">31</div>
<div class="t" style="left:335.0px;top:91.95px;font-size:14px;color:#404040;letter-spacing:0.22px">Nitenpyram</div>
<div class="t" style="left:515.0px;top:91.95px;font-size:14px;color:#404040;letter-spacing:0.22px">suspected</div>
<div class="t" style="left:615.0px;top:91.95px;font-size:14px;color:#404040;letter-spacing:0.3px">27.2 %</div>
<div class="t" style="left:815.0px;top:91.95px;font-size:14px;color:#404040;letter-spacing:0.3px">1.2</div>
<div class="t" style="left:900.0px;top:91.95px;font-size:14px;color:#4f84b8;letter-spacing:0.3px">0.064</div>
<div class="t" style="left:1015.0px;top:91.95px;font-size:14px;color:#4f84b8;letter-spacing:0.3px">63.56</div>
<div class="t" style="left:1115.0px;top:91.95px;font-size:14px;color:#404040;letter-spacing:0.3px">3822</div>
<div class="t" style="left:1200.0px;top:91.95px;font-size:14px;color:#404040;letter-spacing:0.3px">7718610</div>
<div class="t" style="left:1285.0px;top:91.95px;font-size:14px;color:#4f84b8;letter-spacing:0.3px">4.95e-4</div>
<div class="t" style="left:1377.0px;top:91.95px;font-size:14px;color:#404040;letter-spacing:0.22px">TPP</div>
<div class="t" style="left:1557.0px;top:91.95px;font-size:14px;color:#4f84b8;letter-spacing:0.3px">3.7</div>
<div class="a" style="left:22px;top:132px;width:18px;height:18px;border:2px solid #6a6a6a;border-radius:2px"></div>
<div class="t" style="left:270.0px;top:131.95px;font-size:14px;color:#404040;letter-spacing:0.3px">51</div>
<div class="t" style="left:335.0px;top:131.95px;font-size:14px;color:#404040;letter-spacing:0.22px">Metazachlor 479 M16</div>
<div class="t" style="left:515.0px;top:131.95px;font-size:14px;color:#404040;letter-spacing:0.22px">suspected</div>
<div class="t" style="left:615.0px;top:131.95px;font-size:14px;color:#404040;letter-spacing:0.3px">34.7 %</div>
<div class="t" style="left:815.0px;top:131.95px;font-size:14px;color:#404040;letter-spacing:0.3px">1.6</div>
<div class="t" style="left:1200.0px;top:131.95px;font-size:14px;color:#404040;letter-spacing:0.3px">7718610</div>
<div class="t" style="left:1377.0px;top:131.95px;font-size:14px;color:#404040;letter-spacing:0.22px">TPP</div>
<div class="a" style="left:10px;top:160px;width:1632px;height:40px;background:#fafafa"></div>
<div class="a" style="left:22px;top:172px;width:18px;height:18px;border:2px solid #6a6a6a;border-radius:2px"></div>
<div class="t" style="left:270.0px;top:171.95px;font-size:14px;color:#404040;letter-spacing:0.3px">53</div>
<div class="t" style="left:335.0px;top:171.95px;font-size:14px;color:#404040;letter-spacing:0.22px">Methiocarbe-sulfoxide</div>
<div class="t" style="left:515.0px;top:171.95px;font-size:14px;color:#404040;letter-spacing:0.22px">suspected</div>
<div class="t" style="left:615.0px;top:171.95px;font-size:14px;color:#404040;letter-spacing:0.3px">6.3 %</div>
<div class="t" style="left:815.0px;top:171.95px;font-size:14px;color:#404040;letter-spacing:0.3px">1.7</div>
<div class="t" style="left:1200.0px;top:171.95px;font-size:14px;color:#404040;letter-spacing:0.3px">7718610</div>
<div class="t" style="left:1377.0px;top:171.95px;font-size:14px;color:#404040;letter-spacing:0.22px">TPP</div>
<div class="a" style="left:22px;top:212px;width:18px;height:18px;border:2px solid #6a6a6a;border-radius:2px"></div>
<div class="t" style="left:270.0px;top:211.95px;font-size:14px;color:#404040;letter-spacing:0.3px">58</div>
<div class="t" style="left:335.0px;top:211.95px;font-size:14px;color:#404040;letter-spacing:0.22px">Metaldehyde</div>
<div class="t" style="left:515.0px;top:211.95px;font-size:14px;color:#404040;letter-spacing:0.22px">suspected</div>
<div class="t" style="left:615.0px;top:211.95px;font-size:14px;color:#404040;letter-spacing:0.3px">6.3 %</div>
<div class="t" style="left:815.0px;top:211.95px;font-size:14px;color:#404040;letter-spacing:0.3px">1.9</div>
<div class="t" style="left:1200.0px;top:211.95px;font-size:14px;color:#404040;letter-spacing:0.3px">7718610</div>
<div class="t" style="left:1377.0px;top:211.95px;font-size:14px;color:#404040;letter-spacing:0.22px">TPP</div>
<div class="a" style="left:10px;top:240px;width:1632px;height:40px;background:#fafafa"></div>
<div class="a" style="left:22px;top:252px;width:18px;height:18px;border:2px solid #6a6a6a;border-radius:2px"></div>
<div class="t" style="left:270.0px;top:251.95px;font-size:14px;color:#404040;letter-spacing:0.3px">63</div>
<div class="t" style="left:335.0px;top:251.95px;font-size:14px;color:#404040;letter-spacing:0.22px">Fenthion-oxon-sulfoxide</div>
<div class="t" style="left:515.0px;top:251.95px;font-size:14px;color:#404040;letter-spacing:0.22px">suspected</div>
<div class="t" style="left:615.0px;top:251.95px;font-size:14px;color:#404040;letter-spacing:0.3px">6.3 %</div>
<div class="t" style="left:815.0px;top:251.95px;font-size:14px;color:#404040;letter-spacing:0.3px">1.9</div>
<div class="t" style="left:1200.0px;top:251.95px;font-size:14px;color:#404040;letter-spacing:0.3px">7718610</div>
<div class="t" style="left:1377.0px;top:251.95px;font-size:14px;color:#404040;letter-spacing:0.22px">TPP</div>
<div class="a" style="left:22px;top:292px;width:18px;height:18px;border:2px solid #6a6a6a;border-radius:2px"></div>
<div class="t" style="left:270.0px;top:291.95px;font-size:14px;color:#404040;letter-spacing:0.3px">76</div>
<div class="t" style="left:335.0px;top:291.95px;font-size:14px;color:#404040;letter-spacing:0.22px">Sulfoxaflor</div>
<div class="t" style="left:515.0px;top:291.95px;font-size:14px;color:#404040;letter-spacing:0.22px">suspected</div>
<div class="t" style="left:615.0px;top:291.95px;font-size:14px;color:#404040;letter-spacing:0.3px">40.4 %</div>
<div class="t" style="left:815.0px;top:291.95px;font-size:14px;color:#404040;letter-spacing:0.3px">2.1</div>
<div class="t" style="left:900.0px;top:291.95px;font-size:14px;color:#4f84b8;letter-spacing:0.3px">0.002</div>
<div class="t" style="left:1015.0px;top:291.95px;font-size:14px;color:#4f84b8;letter-spacing:0.3px">1.97</div>
<div class="t" style="left:1115.0px;top:291.95px;font-size:14px;color:#404040;letter-spacing:0.3px">387</div>
<div class="t" style="left:1200.0px;top:291.95px;font-size:14px;color:#404040;letter-spacing:0.3px">7718610</div>
<div class="t" style="left:1285.0px;top:291.95px;font-size:14px;color:#4f84b8;letter-spacing:0.3px">5.01e-5</div>
<div class="t" style="left:1377.0px;top:291.95px;font-size:14px;color:#404040;letter-spacing:0.22px">TPP</div>
<div class="t" style="left:1557.0px;top:291.95px;font-size:14px;color:#4f84b8;letter-spacing:0.3px">52.9</div>
<div class="a" style="left:10px;top:320px;width:1632px;height:40px;background:#fafafa"></div>
<div class="a" style="left:22px;top:332px;width:18px;height:18px;border:2px solid #6a6a6a;border-radius:2px"></div>
<div class="t" style="left:270.0px;top:331.95px;font-size:14px;color:#404040;letter-spacing:0.3px">81</div>
<div class="t" style="left:335.0px;top:331.95px;font-size:14px;color:#404040;letter-spacing:0.22px">Phorate-oxon-sulfone</div>
<div class="t" style="left:515.0px;top:331.95px;font-size:14px;color:#404040;letter-spacing:0.22px">suspected</div>
<div class="t" style="left:615.0px;top:331.95px;font-size:14px;color:#404040;letter-spacing:0.3px">85.0 %</div>
<div class="t" style="left:815.0px;top:331.95px;font-size:14px;color:#404040;letter-spacing:0.3px">2.5</div>
<div class="t" style="left:1115.0px;top:331.95px;font-size:14px;color:#404040;letter-spacing:0.3px">3841</div>
<div class="t" style="left:1200.0px;top:331.95px;font-size:14px;color:#404040;letter-spacing:0.3px">7718610</div>
<div class="t" style="left:1285.0px;top:331.95px;font-size:14px;color:#404040;letter-spacing:0.3px">4.99e-4</div>
<div class="t" style="left:1377.0px;top:331.95px;font-size:14px;color:#404040;letter-spacing:0.22px">TPP</div>
<div class="t" style="left:1557.0px;top:331.95px;font-size:14px;color:#4f84b8;letter-spacing:0.22px">&gt; 100</div>
<svg style="left:0;top:0" width="1662" height="337"><g transform="translate(69.69999999999999,10) scale(1)"><path fill="#c40000" d="M11 15h2v2h-2zm0-8h2v6h-2zm.99-5C6.47 2 2 6.48 2 12s4.47 10 9.99 10C17.52 22 22 17.52 22 12S17.52 2 11.99 2zM12 20c-4.42 0-8-3.58-8-8s3.58-8 8-8 8 3.58 8 8-3.58 8-8 8z"/></g><g transform="translate(138,12)"><circle cx="9" cy="9" r="9" fill="#6e6e6e"/><path d="M6.6 17.2L9 19.6L11.4 17.2Z" fill="#6e6e6e"/><circle cx="9" cy="5" r="3" fill="#fff"/><ellipse cx="9" cy="13.1" rx="6.2" ry="3.3" fill="#fff"/></g><g transform="translate(195,10)"><circle cx="10" cy="10" r="10" fill="#6e6e6e"/><path d="M2.9 7.3L4.5 6.6L6.4 9.6L10.6 4.3L13.6 3.5L16.4 5.2L18.1 9.2Q17.9 14.6 13.0 17.3Q8.2 18.9 5.2 15.4Q3.5 12.4 2.9 7.3Z" fill="#fff"/><path d="M10.3 9.2L13.3 4.6M12.1 10.7L16.3 6.2M14.0 12.1L17.5 8.6" stroke="#6e6e6e" stroke-width="0.9"/></g><g transform="translate(716,9)" stroke="#175c8f" fill="none" stroke-width="2.0"><circle cx="13" cy="11.5" r="3.8"/><rect x="3.6" y="3.6" width="2.8" height="2.8" rx="0.9" stroke-width="1.5"/><rect x="6.6" y="17.1" width="2.8" height="2.8" rx="0.9" stroke-width="1.5"/><path d="M6.4 6.4L10.3 8.9M9 17.2L10.6 14.6M17.6 8.5L16 9.8" stroke-width="1.5"/><circle cx="19.2" cy="7.3" r="1.7" fill="#175c8f" stroke="none"/></g><g transform="translate(749,12.5)" stroke="#b5b5b5" fill="none" stroke-width="1.9"><circle cx="7.6" cy="8" r="5.7"/><path d="M0.5 15.5L15.2 0.6" stroke-dasharray="3.2 1.2 20 1.2 3.2"/></g><g transform="translate(777,12)" fill="none" stroke="#b5b5b5" stroke-width="1.9"><path d="M9.2 2.6A6.7 6.7 0 1 1 7.4 15.6"/></g><g transform="translate(777,12)" fill="#b5b5b5"><path d="M5.0 2.6L9.8 0.2L9.6 5.6Z"/><rect x="0.2" y="6.2" width="1.9" height="1.9"/><rect x="0.2" y="10.3" width="1.9" height="1.9"/><rect x="3.6" y="14.0" width="1.9" height="1.9"/></g><g transform="translate(70.19999999999999,51.10000000000002) scale(0.95)"><path fill="#e39021" d="M12 5.99L19.53 19H4.47L12 5.99M12 2L1 21h22L12 2zm1 14h-2v2h2v-2zm0-6h-2v4h2v-4z"/></g><g transform="translate(138,52)"><circle cx="9" cy="9" r="9" fill="#6e6e6e"/><path d="M6.6 17.2L9 19.6L11.4 17.2Z" fill="#6e6e6e"/><circle cx="9" cy="5" r="3" fill="#fff"/><ellipse cx="9" cy="13.1" rx="6.2" ry="3.3" fill="#fff"/></g><g transform="translate(195,50)"><circle cx="10" cy="10" r="10" fill="#6e6e6e"/><path d="M2.9 7.3L4.5 6.6L6.4 9.6L10.6 4.3L13.6 3.5L16.4 5.2L18.1 9.2Q17.9 14.6 13.0 17.3Q8.2 18.9 5.2 15.4Q3.5 12.4 2.9 7.3Z" fill="#fff"/><path d="M10.3 9.2L13.3 4.6M12.1 10.7L16.3 6.2M14.0 12.1L17.5 8.6" stroke="#6e6e6e" stroke-width="0.9"/></g><g transform="translate(716,49)" stroke="#175c8f" fill="none" stroke-width="2.0"><circle cx="13" cy="11.5" r="3.8"/><rect x="3.6" y="3.6" width="2.8" height="2.8" rx="0.9" stroke-width="1.5"/><rect x="6.6" y="17.1" width="2.8" height="2.8" rx="0.9" stroke-width="1.5"/><path d="M6.4 6.4L10.3 8.9M9 17.2L10.6 14.6M17.6 8.5L16 9.8" stroke-width="1.5"/><circle cx="19.2" cy="7.3" r="1.7" fill="#175c8f" stroke="none"/></g><g transform="translate(749,52.5)" stroke="#b5b5b5" fill="none" stroke-width="1.9"><circle cx="7.6" cy="8" r="5.7"/><path d="M0.5 15.5L15.2 0.6" stroke-dasharray="3.2 1.2 20 1.2 3.2"/></g><g transform="translate(777,52)" fill="none" stroke="#b5b5b5" stroke-width="1.9"><path d="M9.2 2.6A6.7 6.7 0 1 1 7.4 15.6"/></g><g transform="translate(777,52)" fill="#b5b5b5"><path d="M5.0 2.6L9.8 0.2L9.6 5.6Z"/><rect x="0.2" y="6.2" width="1.9" height="1.9"/><rect x="0.2" y="10.3" width="1.9" height="1.9"/><rect x="3.6" y="14.0" width="1.9" height="1.9"/></g><g transform="translate(69.69999999999999,90) scale(1)"><path fill="#c40000" d="M11 15h2v2h-2zm0-8h2v6h-2zm.99-5C6.47 2 2 6.48 2 12s4.47 10 9.99 10C17.52 22 22 17.52 22 12S17.52 2 11.99 2zM12 20c-4.42 0-8-3.58-8-8s3.58-8 8-8 8 3.58 8 8-3.58 8-8 8z"/></g><g transform="translate(138,92)"><circle cx="9" cy="9" r="9" fill="#6e6e6e"/><path d="M6.6 17.2L9 19.6L11.4 17.2Z" fill="#6e6e6e"/><circle cx="9" cy="5" r="3" fill="#fff"/><ellipse cx="9" cy="13.1" rx="6.2" ry="3.3" fill="#fff"/></g><g transform="translate(195,90)"><circle cx="10" cy="10" r="10" fill="#6e6e6e"/><path d="M2.9 7.3L4.5 6.6L6.4 9.6L10.6 4.3L13.6 3.5L16.4 5.2L18.1 9.2Q17.9 14.6 13.0 17.3Q8.2 18.9 5.2 15.4Q3.5 12.4 2.9 7.3Z" fill="#fff"/><path d="M10.3 9.2L13.3 4.6M12.1 10.7L16.3 6.2M14.0 12.1L17.5 8.6" stroke="#6e6e6e" stroke-width="0.9"/></g><g transform="translate(716,89)" stroke="#b5b5b5" fill="none" stroke-width="2.0"><circle cx="13" cy="11.5" r="3.8"/><rect x="3.6" y="3.6" width="2.8" height="2.8" rx="0.9" stroke-width="1.5"/><rect x="6.6" y="17.1" width="2.8" height="2.8" rx="0.9" stroke-width="1.5"/><path d="M6.4 6.4L10.3 8.9M9 17.2L10.6 14.6M17.6 8.5L16 9.8" stroke-width="1.5"/><circle cx="19.2" cy="7.3" r="1.7" fill="#b5b5b5" stroke="none"/></g><g transform="translate(749,92.5)" stroke="#b5b5b5" fill="none" stroke-width="1.9"><circle cx="7.6" cy="8" r="5.7"/><path d="M0.5 15.5L15.2 0.6" stroke-dasharray="3.2 1.2 20 1.2 3.2"/></g><g transform="translate(777,92)" fill="none" stroke="#b5b5b5" stroke-width="1.9"><path d="M9.2 2.6A6.7 6.7 0 1 1 7.4 15.6"/></g><g transform="translate(777,92)" fill="#b5b5b5"><path d="M5.0 2.6L9.8 0.2L9.6 5.6Z"/><rect x="0.2" y="6.2" width="1.9" height="1.9"/><rect x="0.2" y="10.3" width="1.9" height="1.9"/><rect x="3.6" y="14.0" width="1.9" height="1.9"/></g><g transform="translate(70.19999999999999,131.10000000000002) scale(0.95)"><path fill="#e39021" d="M12 5.99L19.53 19H4.47L12 5.99M12 2L1 21h22L12 2zm1 14h-2v2h2v-2zm0-6h-2v4h2v-4z"/></g><g transform="translate(138,132)"><circle cx="9" cy="9" r="9" fill="#6e6e6e"/><path d="M6.6 17.2L9 19.6L11.4 17.2Z" fill="#6e6e6e"/><circle cx="9" cy="5" r="3" fill="#fff"/><ellipse cx="9" cy="13.1" rx="6.2" ry="3.3" fill="#fff"/></g><g transform="translate(716,129)" stroke="#b5b5b5" fill="none" stroke-width="2.0"><circle cx="13" cy="11.5" r="3.8"/><rect x="3.6" y="3.6" width="2.8" height="2.8" rx="0.9" stroke-width="1.5"/><rect x="6.6" y="17.1" width="2.8" height="2.8" rx="0.9" stroke-width="1.5"/><path d="M6.4 6.4L10.3 8.9M9 17.2L10.6 14.6M17.6 8.5L16 9.8" stroke-width="1.5"/><circle cx="19.2" cy="7.3" r="1.7" fill="#b5b5b5" stroke="none"/></g><g transform="translate(749,132.5)" stroke="#b5b5b5" fill="none" stroke-width="1.9"><circle cx="7.6" cy="8" r="5.7"/><path d="M0.5 15.5L15.2 0.6" stroke-dasharray="3.2 1.2 20 1.2 3.2"/></g><g transform="translate(777,132)" fill="none" stroke="#b5b5b5" stroke-width="1.9"><path d="M9.2 2.6A6.7 6.7 0 1 1 7.4 15.6"/></g><g transform="translate(777,132)" fill="#b5b5b5"><path d="M5.0 2.6L9.8 0.2L9.6 5.6Z"/><rect x="0.2" y="6.2" width="1.9" height="1.9"/><rect x="0.2" y="10.3" width="1.9" height="1.9"/><rect x="3.6" y="14.0" width="1.9" height="1.9"/></g><g transform="translate(70.19999999999999,171.10000000000002) scale(0.95)"><path fill="#e39021" d="M12 5.99L19.53 19H4.47L12 5.99M12 2L1 21h22L12 2zm1 14h-2v2h2v-2zm0-6h-2v4h2v-4z"/></g><g transform="translate(138,172)"><circle cx="9" cy="9" r="9" fill="#6e6e6e"/><path d="M6.6 17.2L9 19.6L11.4 17.2Z" fill="#6e6e6e"/><circle cx="9" cy="5" r="3" fill="#fff"/><ellipse cx="9" cy="13.1" rx="6.2" ry="3.3" fill="#fff"/></g><g transform="translate(716,169)" stroke="#b5b5b5" fill="none" stroke-width="2.0"><circle cx="13" cy="11.5" r="3.8"/><rect x="3.6" y="3.6" width="2.8" height="2.8" rx="0.9" stroke-width="1.5"/><rect x="6.6" y="17.1" width="2.8" height="2.8" rx="0.9" stroke-width="1.5"/><path d="M6.4 6.4L10.3 8.9M9 17.2L10.6 14.6M17.6 8.5L16 9.8" stroke-width="1.5"/><circle cx="19.2" cy="7.3" r="1.7" fill="#b5b5b5" stroke="none"/></g><g transform="translate(749,172.5)" stroke="#b5b5b5" fill="none" stroke-width="1.9"><circle cx="7.6" cy="8" r="5.7"/><path d="M0.5 15.5L15.2 0.6" stroke-dasharray="3.2 1.2 20 1.2 3.2"/></g><g transform="translate(777,172)" fill="none" stroke="#b5b5b5" stroke-width="1.9"><path d="M9.2 2.6A6.7 6.7 0 1 1 7.4 15.6"/></g><g transform="translate(777,172)" fill="#b5b5b5"><path d="M5.0 2.6L9.8 0.2L9.6 5.6Z"/><rect x="0.2" y="6.2" width="1.9" height="1.9"/><rect x="0.2" y="10.3" width="1.9" height="1.9"/><rect x="3.6" y="14.0" width="1.9" height="1.9"/></g><g transform="translate(70.19999999999999,211.10000000000002) scale(0.95)"><path fill="#e39021" d="M12 5.99L19.53 19H4.47L12 5.99M12 2L1 21h22L12 2zm1 14h-2v2h2v-2zm0-6h-2v4h2v-4z"/></g><g transform="translate(138,212)"><circle cx="9" cy="9" r="9" fill="#6e6e6e"/><path d="M6.6 17.2L9 19.6L11.4 17.2Z" fill="#6e6e6e"/><circle cx="9" cy="5" r="3" fill="#fff"/><ellipse cx="9" cy="13.1" rx="6.2" ry="3.3" fill="#fff"/></g><g transform="translate(716,209)" stroke="#b5b5b5" fill="none" stroke-width="2.0"><circle cx="13" cy="11.5" r="3.8"/><rect x="3.6" y="3.6" width="2.8" height="2.8" rx="0.9" stroke-width="1.5"/><rect x="6.6" y="17.1" width="2.8" height="2.8" rx="0.9" stroke-width="1.5"/><path d="M6.4 6.4L10.3 8.9M9 17.2L10.6 14.6M17.6 8.5L16 9.8" stroke-width="1.5"/><circle cx="19.2" cy="7.3" r="1.7" fill="#b5b5b5" stroke="none"/></g><g transform="translate(749,212.5)" stroke="#b5b5b5" fill="none" stroke-width="1.9"><circle cx="7.6" cy="8" r="5.7"/><path d="M0.5 15.5L15.2 0.6" stroke-dasharray="3.2 1.2 20 1.2 3.2"/></g><g transform="translate(777,212)" fill="none" stroke="#b5b5b5" stroke-width="1.9"><path d="M9.2 2.6A6.7 6.7 0 1 1 7.4 15.6"/></g><g transform="translate(777,212)" fill="#b5b5b5"><path d="M5.0 2.6L9.8 0.2L9.6 5.6Z"/><rect x="0.2" y="6.2" width="1.9" height="1.9"/><rect x="0.2" y="10.3" width="1.9" height="1.9"/><rect x="3.6" y="14.0" width="1.9" height="1.9"/></g><g transform="translate(69.69999999999999,250) scale(1)"><path fill="#c40000" d="M11 15h2v2h-2zm0-8h2v6h-2zm.99-5C6.47 2 2 6.48 2 12s4.47 10 9.99 10C17.52 22 22 17.52 22 12S17.52 2 11.99 2zM12 20c-4.42 0-8-3.58-8-8s3.58-8 8-8 8 3.58 8 8-3.58 8-8 8z"/></g><g transform="translate(138,252)"><circle cx="9" cy="9" r="9" fill="#6e6e6e"/><path d="M6.6 17.2L9 19.6L11.4 17.2Z" fill="#6e6e6e"/><circle cx="9" cy="5" r="3" fill="#fff"/><ellipse cx="9" cy="13.1" rx="6.2" ry="3.3" fill="#fff"/></g><g transform="translate(716,249)" stroke="#b5b5b5" fill="none" stroke-width="2.0"><circle cx="13" cy="11.5" r="3.8"/><rect x="3.6" y="3.6" width="2.8" height="2.8" rx="0.9" stroke-width="1.5"/><rect x="6.6" y="17.1" width="2.8" height="2.8" rx="0.9" stroke-width="1.5"/><path d="M6.4 6.4L10.3 8.9M9 17.2L10.6 14.6M17.6 8.5L16 9.8" stroke-width="1.5"/><circle cx="19.2" cy="7.3" r="1.7" fill="#b5b5b5" stroke="none"/></g><g transform="translate(749,252.5)" stroke="#b5b5b5" fill="none" stroke-width="1.9"><circle cx="7.6" cy="8" r="5.7"/><path d="M0.5 15.5L15.2 0.6" stroke-dasharray="3.2 1.2 20 1.2 3.2"/></g><g transform="translate(777,252)" fill="none" stroke="#b5b5b5" stroke-width="1.9"><path d="M9.2 2.6A6.7 6.7 0 1 1 7.4 15.6"/></g><g transform="translate(777,252)" fill="#b5b5b5"><path d="M5.0 2.6L9.8 0.2L9.6 5.6Z"/><rect x="0.2" y="6.2" width="1.9" height="1.9"/><rect x="0.2" y="10.3" width="1.9" height="1.9"/><rect x="3.6" y="14.0" width="1.9" height="1.9"/></g><g transform="translate(70.19999999999999,291.1) scale(0.95)"><path fill="#e39021" d="M12 5.99L19.53 19H4.47L12 5.99M12 2L1 21h22L12 2zm1 14h-2v2h2v-2zm0-6h-2v4h2v-4z"/></g><g transform="translate(138,292)"><circle cx="9" cy="9" r="9" fill="#6e6e6e"/><path d="M6.6 17.2L9 19.6L11.4 17.2Z" fill="#6e6e6e"/><circle cx="9" cy="5" r="3" fill="#fff"/><ellipse cx="9" cy="13.1" rx="6.2" ry="3.3" fill="#fff"/></g><g transform="translate(716,289)" stroke="#b5b5b5" fill="none" stroke-width="2.0"><circle cx="13" cy="11.5" r="3.8"/><rect x="3.6" y="3.6" width="2.8" height="2.8" rx="0.9" stroke-width="1.5"/><rect x="6.6" y="17.1" width="2.8" height="2.8" rx="0.9" stroke-width="1.5"/><path d="M6.4 6.4L10.3 8.9M9 17.2L10.6 14.6M17.6 8.5L16 9.8" stroke-width="1.5"/><circle cx="19.2" cy="7.3" r="1.7" fill="#b5b5b5" stroke="none"/></g><g transform="translate(749,292.5)" stroke="#b5b5b5" fill="none" stroke-width="1.9"><circle cx="7.6" cy="8" r="5.7"/><path d="M0.5 15.5L15.2 0.6" stroke-dasharray="3.2 1.2 20 1.2 3.2"/></g><g transform="translate(777,292)" fill="none" stroke="#b5b5b5" stroke-width="1.9"><path d="M9.2 2.6A6.7 6.7 0 1 1 7.4 15.6"/></g><g transform="translate(777,292)" fill="#b5b5b5"><path d="M5.0 2.6L9.8 0.2L9.6 5.6Z"/><rect x="0.2" y="6.2" width="1.9" height="1.9"/><rect x="0.2" y="10.3" width="1.9" height="1.9"/><rect x="3.6" y="14.0" width="1.9" height="1.9"/></g><g transform="translate(69.69999999999999,330) scale(1)"><path fill="#c40000" d="M11 15h2v2h-2zm0-8h2v6h-2zm.99-5C6.47 2 2 6.48 2 12s4.47 10 9.99 10C17.52 22 22 17.52 22 12S17.52 2 11.99 2zM12 20c-4.42 0-8-3.58-8-8s3.58-8 8-8 8 3.58 8 8-3.58 8-8 8z"/></g><g transform="translate(138,332)"><circle cx="9" cy="9" r="9" fill="#6e6e6e"/><path d="M6.6 17.2L9 19.6L11.4 17.2Z" fill="#6e6e6e"/><circle cx="9" cy="5" r="3" fill="#fff"/><ellipse cx="9" cy="13.1" rx="6.2" ry="3.3" fill="#fff"/></g><g transform="translate(716,329)" stroke="#b5b5b5" fill="none" stroke-width="2.0"><circle cx="13" cy="11.5" r="3.8"/><rect x="3.6" y="3.6" width="2.8" height="2.8" rx="0.9" stroke-width="1.5"/><rect x="6.6" y="17.1" width="2.8" height="2.8" rx="0.9" stroke-width="1.5"/><path d="M6.4 6.4L10.3 8.9M9 17.2L10.6 14.6M17.6 8.5L16 9.8" stroke-width="1.5"/><circle cx="19.2" cy="7.3" r="1.7" fill="#b5b5b5" stroke="none"/></g><g transform="translate(749,332.5)" stroke="#b5b5b5" fill="none" stroke-width="1.9"><circle cx="7.6" cy="8" r="5.7"/><path d="M0.5 15.5L15.2 0.6" stroke-dasharray="3.2 1.2 20 1.2 3.2"/></g><g transform="translate(777,332)" fill="none" stroke="#b5b5b5" stroke-width="1.9"><path d="M9.2 2.6A6.7 6.7 0 1 1 7.4 15.6"/></g><g transform="translate(777,332)" fill="#b5b5b5"><path d="M5.0 2.6L9.8 0.2L9.6 5.6Z"/><rect x="0.2" y="6.2" width="1.9" height="1.9"/><rect x="0.2" y="10.3" width="1.9" height="1.9"/><rect x="3.6" y="14.0" width="1.9" height="1.9"/></g></svg>
</div>
<div class="a" style="left:1890px;top:223px;width:10px;height:85px;border-radius:5px;background:#b3b3b3"></div>
<div class="a" style="left:258px;top:560px;width:1062px;height:10px;border-radius:5px;background:#b3b3b3"></div>
<svg style="left:0;top:0" width="400" height="520"><path d="M349.6 487.1L349.6 502.5L345.6 498.4L343.2 504.6Q342.6 506.4 341 505.9L340.3 505.5Q339.6 504.9 340.1 503.6L342.4 497.5L338.1 497.5Z" fill="#fff" stroke="#111" stroke-width="1" stroke-linejoin="round"/></svg>
<svg style="left:0;top:0" width="1916" height="1007"><defs><clipPath id="cc"><rect x="250" y="598" width="1480" height="381"/></clipPath></defs><g clip-path="url(#cc)" font-family="Liberation Sans"><text x="425.0" y="629.9" font-size="12" fill="#666" font-weight="bold" text-anchor="middle">Amitrole</text><path d="M344.1 643.4H538.3" stroke="#e2e2e2" stroke-width="1"/><text x="343.7" y="646.9" font-size="11" fill="#616161" font-weight="normal" text-anchor="end" letter-spacing="0.6">2.0e+4</text><path d="M344.1 710.3H538.3" stroke="#e2e2e2" stroke-width="1"/><text x="343.7" y="713.8" font-size="11" fill="#616161" font-weight="normal" text-anchor="end" letter-spacing="0.6">1.0e+4</text><path d="M344.1 777.4H538.3" stroke="#e2e2e2" stroke-width="1"/><text x="343.7" y="780.9" font-size="11" fill="#616161" font-weight="normal" text-anchor="end" letter-spacing="0.6">0.0</text><path d="M344.1 777.4H538.3" stroke="#e2e2e2" stroke-width="1"/><path d="M400.7 643.4V787.9" stroke="#e2e2e2" stroke-width="1"/><path d="M506.5 643.4V787.9" stroke="#e2e2e2" stroke-width="1"/><path d="M353.6 643.4V787.9M538.3 643.4V787.9" stroke="#e2e2e2" stroke-width="1"/><text x="353.9" y="798.6" font-size="11" fill="#616161" font-weight="normal" text-anchor="middle" letter-spacing="0.6">0.3</text><text x="401.0" y="798.6" font-size="11" fill="#616161" font-weight="normal" text-anchor="middle" letter-spacing="0.6">0.5</text><text x="506.8" y="798.6" font-size="11" fill="#616161" font-weight="normal" text-anchor="middle" letter-spacing="0.6">1.0</text><text x="538.6" y="798.6" font-size="11" fill="#616161" font-weight="normal" text-anchor="middle" letter-spacing="0.6">1.2</text><path d="M344.1 777.4H538.3" stroke="#b8b8b8" stroke-width="1.3"/><path d="M362.5 777.4 C374.8 777.4 387.0 777.3 399.3 777.2 C405.9 777.1 412.5 776.9 419.1 776.4 C422.5 776.1 425.8 774.8 429.1 774.8 C432.4 774.8 435.7 776.4 439.0 776.4 C445.6 776.4 452.2 776.0 458.9 776.0 C465.5 776.0 472.1 777.1 478.7 777.2 C495.6 777.3 512.5 777.4 529.3 777.4" fill="none" stroke="#f5937d" stroke-width="1"/><path d="M362.5 776.8 C368.8 776.7 375.1 776.7 381.4 776.4 C382.1 776.4 382.7 774.4 383.4 774.4 C384.1 774.4 384.7 776.8 385.4 776.8 C394.0 777.1 402.6 777.2 411.2 777.2 C415.2 777.2 419.1 776.3 423.1 775.8 C427.1 775.3 431.1 774.0 435.0 774.0 C440.3 774.0 445.6 776.0 450.9 776.0 C455.5 776.0 460.2 774.6 464.8 773.2 C467.5 772.4 470.1 770.4 472.8 770.4 C475.4 770.4 478.1 771.8 480.7 771.8 C483.3 771.8 486.0 771.2 488.6 771.2 C492.0 771.2 495.3 773.6 498.6 774.4 C501.9 775.3 505.2 776.1 508.5 776.4 C515.4 776.9 522.4 777.1 529.3 777.2" fill="none" stroke="#5a90c4" stroke-width="1"/><path d="M362.5 777.2 C377.4 777.2 392.3 777.2 407.2 777.2 C409.2 777.2 411.2 776.9 413.2 776.4 C414.5 776.0 415.8 765.3 417.2 760.9 C418.5 756.5 419.8 753.3 421.1 750.0 C422.5 746.7 423.8 747.0 425.1 741.1 C426.3 735.7 427.5 720.8 428.7 705.3 C429.5 695.0 430.3 674.0 431.1 669.6 C432.0 664.0 433.0 661.2 434.0 661.2 C435.0 661.2 436.0 664.7 437.0 667.6 C439.0 673.3 441.0 680.8 443.0 693.4 C444.6 703.9 446.3 721.0 447.9 733.1 C449.3 742.8 450.6 759.4 451.9 759.9 C453.6 760.6 455.2 760.3 456.9 760.9 C458.2 761.4 459.5 763.2 460.8 764.9 C462.8 767.4 464.8 773.2 466.8 774.8 C468.8 776.4 470.8 777.2 472.8 777.2 C481.4 777.2 490.0 777.2 498.6 777.2 C502.5 777.2 506.5 775.7 510.5 775.2 C513.1 774.9 515.8 774.4 518.4 774.4 C522.1 774.4 525.7 775.4 529.3 776.4" fill="none" stroke="#78d378" stroke-width="1"/><path d="M405.8 777.4 C410.3 777.0 414.7 776.5 419.1 775.8 C422.5 775.3 425.8 773.8 429.1 773.8 C432.4 773.8 435.7 775.2 439.0 775.2 C444.3 775.2 449.6 774.6 454.9 774.0 C458.9 773.6 462.8 772.4 466.8 772.4 C470.1 772.4 473.4 773.6 476.7 774.8 L476.7 777.4 L405.8 777.4 Z" fill="rgba(236,170,105,0.62)" stroke="none"/><path d="M399.9 780.2L405.8 770.0L411.7 780.2Z" fill="#e5973f"/><path d="M470.8 775.8L476.7 765.6L482.6 775.8Z" fill="#e5973f"/><path d="M432.0 643.4V777.4" stroke="#3b6a92" stroke-width="1.3"/><text x="432.0" y="655.6" font-size="10" fill="#2f6ca3" font-weight="bold" text-anchor="middle">RT Cor</text><text x="432.0" y="770.8" font-size="10" fill="#e3963f" font-weight="bold" text-anchor="middle">RT Cal</text><rect x="354.6" y="647" width="75.9" height="43" fill="rgba(255,255,255,0.62)"/><text x="356.2" y="658.8" font-size="10" fill="#2f6ca3" font-weight="bold" text-anchor="start">Q: 85 &gt; 43.15</text><text x="356.2" y="672.7" font-size="10" fill="#52c052" font-weight="normal" text-anchor="start" textLength="43.8" lengthAdjust="spacingAndGlyphs">Q: 85 &gt; 57</text><text x="356.2" y="686.6" font-size="10" fill="#f5896f" font-weight="normal" text-anchor="start" textLength="43.8" lengthAdjust="spacingAndGlyphs">Q: 85 &gt; 58</text><path d="M422.0 658.8L425.3 650.2L428.6 658.8Z" fill="#2f6ca3"/><circle cx="520.8" cy="660.7" r="8.9" fill="none" stroke="#c40000" stroke-width="2"/><rect x="519.8" y="655.3000000000001" width="2" height="6.4" fill="#c40000"/><rect x="519.8" y="663.3000000000001" width="2" height="2.2" fill="#c40000"/><text x="675.0" y="629.9" font-size="12" fill="#666" font-weight="bold" text-anchor="middle">Quinmerac</text><path d="M594.1 643.4H788.3" stroke="#e2e2e2" stroke-width="1"/><text x="593.7" y="646.9" font-size="11" fill="#616161" font-weight="normal" text-anchor="end" letter-spacing="0.6">1.0e+4</text><path d="M594.1 711.3H788.3" stroke="#e2e2e2" stroke-width="1"/><text x="593.7" y="714.8" font-size="11" fill="#616161" font-weight="normal" text-anchor="end" letter-spacing="0.6">5000.0</text><path d="M594.1 778.4H788.3" stroke="#e2e2e2" stroke-width="1"/><text x="593.7" y="781.9" font-size="11" fill="#616161" font-weight="normal" text-anchor="end" letter-spacing="0.6">0.0</text><path d="M594.1 778.4H788.3" stroke="#e2e2e2" stroke-width="1"/><path d="M689.6 643.4V788.9" stroke="#e2e2e2" stroke-width="1"/><path d="M603.6 643.4V788.9M788.3 643.4V788.9" stroke="#e2e2e2" stroke-width="1"/><text x="603.9" y="798.6" font-size="11" fill="#616161" font-weight="normal" text-anchor="middle" letter-spacing="0.6">0.6</text><text x="689.9" y="798.6" font-size="11" fill="#616161" font-weight="normal" text-anchor="middle" letter-spacing="0.6">1.0</text><text x="788.6" y="798.6" font-size="11" fill="#616161" font-weight="normal" text-anchor="middle" letter-spacing="0.6">1.5</text><path d="M594.1 778.4H788.3" stroke="#b8b8b8" stroke-width="1.3"/><path d="M612.2 711.3 C612.9 701.0 613.7 690.8 614.5 685.5 C615.5 678.8 616.5 675.5 617.5 675.5 C618.8 675.5 620.2 680.8 621.5 685.5 C623.1 691.3 624.8 699.3 626.4 709.3 C627.8 717.3 629.1 728.1 630.4 737.1 C631.7 746.0 633.1 758.7 634.4 762.9 C636.0 768.2 637.7 768.5 639.4 770.8 C641.3 773.6 643.3 777.7 645.3 777.8 C653.3 778.2 661.2 778.4 669.1 778.4 C672.5 778.4 675.8 776.1 679.1 774.8 C682.4 773.6 685.7 772.5 689.0 770.8 C690.9 769.9 692.7 769.8 694.6 767.9 C696.7 765.6 698.8 756.3 700.9 753.0 C702.6 750.3 704.2 748.0 705.9 748.0 C707.5 748.0 709.2 751.6 710.8 755.0 C712.8 759.0 714.8 769.4 716.8 771.8 C719.4 775.1 722.1 775.6 724.7 776.8 C726.4 777.5 728.1 778.4 729.7 778.4 C733.3 778.4 737.0 773.8 740.6 773.8 C743.3 773.8 745.9 777.7 748.6 777.8 C758.8 778.2 769.1 778.3 779.3 778.4" fill="none" stroke="#78d378" stroke-width="1"/><path d="M694.6 643.4V778.4" stroke="#3b6a92" stroke-width="1.3"/><text x="694.6" y="655.6" font-size="10" fill="#2f6ca3" font-weight="bold" text-anchor="middle">RT Cor</text><text x="694.6" y="770.8" font-size="10" fill="#e3963f" font-weight="bold" text-anchor="middle">RT Cal</text><rect x="604.6" y="647" width="92.4" height="43" fill="rgba(255,255,255,0.62)"/><text x="606.2" y="658.8" font-size="10" fill="#2f6ca3" font-weight="bold" text-anchor="start">Q: 221.8 &gt; 165.2</text><text x="606.2" y="672.7" font-size="10" fill="#52c052" font-weight="normal" text-anchor="start">Q: 221.8 &gt; 204</text><text x="606.2" y="686.6" font-size="10" fill="#f5896f" font-weight="normal" text-anchor="start">Q: 221.8 &gt; 141</text><path d="M686.7 658.8L690.0 650.2L693.3 658.8Z" fill="#2f6ca3"/><path d="M770.8 652.1L781.0 669.5H760.6Z" fill="none" stroke="#e3901c" stroke-width="2.1" stroke-linejoin="miter"/><rect x="769.8" y="658.5" width="2" height="4.8" fill="#e3901c"/><rect x="769.8" y="664.5" width="2" height="2" fill="#e3901c"/><text x="925.0" y="629.9" font-size="12" fill="#666" font-weight="bold" text-anchor="middle">Nitenpyram</text><path d="M844.1 643.4H1038.3" stroke="#e2e2e2" stroke-width="1"/><text x="843.7" y="646.9" font-size="11" fill="#616161" font-weight="normal" text-anchor="end" letter-spacing="0.6">1000.0</text><path d="M844.1 697.4H1038.3" stroke="#e2e2e2" stroke-width="1"/><text x="843.7" y="700.9" font-size="11" fill="#616161" font-weight="normal" text-anchor="end" letter-spacing="0.6">500.0</text><path d="M844.1 752.2H1038.3" stroke="#e2e2e2" stroke-width="1"/><text x="843.7" y="755.7" font-size="11" fill="#616161" font-weight="normal" text-anchor="end" letter-spacing="0.6">0.0</text><path d="M844.1 778.4H1038.3" stroke="#e2e2e2" stroke-width="1"/><path d="M896.7 643.4V788.9" stroke="#e2e2e2" stroke-width="1"/><path d="M1002.5 643.4V788.9" stroke="#e2e2e2" stroke-width="1"/><path d="M853.6 643.4V788.9M1038.3 643.4V788.9" stroke="#e2e2e2" stroke-width="1"/><text x="853.9" y="798.6" font-size="11" fill="#616161" font-weight="normal" text-anchor="middle" letter-spacing="0.6">0.8</text><text x="897.0" y="798.6" font-size="11" fill="#616161" font-weight="normal" text-anchor="middle" letter-spacing="0.6">1.0</text><text x="1002.8" y="798.6" font-size="11" fill="#616161" font-weight="normal" text-anchor="middle" letter-spacing="0.6">1.5</text><text x="1038.6" y="798.6" font-size="11" fill="#616161" font-weight="normal" text-anchor="middle" letter-spacing="0.6">1.7</text><path d="M844.1 752.2H1038.3" stroke="#b8b8b8" stroke-width="1.3"/><path d="M862.2 751.4 C890.4 751.4 918.7 751.4 946.9 751.4 C948.6 751.4 950.3 745.3 951.9 743.0 C953.6 740.8 955.2 738.1 956.9 738.1 C958.5 738.1 960.2 740.8 961.8 743.0 C963.5 745.3 965.1 751.4 966.8 751.4 C987.6 751.4 1008.5 751.4 1029.3 751.4" fill="none" stroke="#f5937d" stroke-width="1"/><path d="M862.2 751.4 C867.2 751.4 872.3 751.4 877.4 751.4 C880.1 751.4 882.7 727.2 885.4 727.2 C886.7 727.2 888.0 729.6 889.4 731.1 C890.7 732.6 892.0 736.1 893.3 736.1 C895.0 736.1 896.6 712.4 898.3 697.4 C899.4 687.1 900.5 663.6 901.7 663.6 C902.7 663.6 903.8 665.6 904.8 669.6 C906.3 675.0 907.8 710.1 909.2 721.2 C911.9 741.3 914.5 751.4 917.2 751.4 C921.1 751.4 925.1 751.4 929.1 751.4 C930.4 751.4 931.7 734.2 933.0 725.2 C935.0 711.6 937.0 682.5 939.0 682.5 C940.0 682.5 941.0 682.8 942.0 683.5 C943.6 684.6 945.3 703.7 946.9 713.3 C949.3 726.7 951.6 751.4 953.9 751.4 C966.1 751.4 978.4 751.4 990.6 751.4 C993.3 751.4 995.9 738.1 998.6 738.1 C1001.2 738.1 1003.9 751.4 1006.5 751.4 C1014.1 751.4 1021.7 751.4 1029.3 751.4" fill="none" stroke="#5a90c4" stroke-width="1"/><path d="M862.2 751.4 C864.6 751.4 867.1 751.4 869.5 751.4 C871.5 751.4 873.5 737.5 875.5 731.1 C877.4 724.8 879.4 717.2 881.4 713.3 C883.4 709.3 885.4 709.9 887.4 707.3 C889.4 704.7 891.3 697.4 893.3 697.4 C894.7 697.4 896.0 697.4 897.3 697.4 C899.3 697.4 901.3 692.6 903.3 688.4 C904.6 685.7 905.9 678.5 907.2 678.5 C908.9 678.5 910.5 684.2 912.2 689.4 C914.5 696.8 916.8 711.8 919.1 721.2 C921.8 732.0 924.4 745.8 927.1 749.0 C928.4 750.6 929.7 751.4 931.1 751.4 C933.7 751.4 936.4 743.4 939.0 733.1 C941.6 722.8 944.3 701.7 946.9 689.4 C948.6 681.8 950.3 669.2 951.9 669.2 C953.6 669.2 955.2 673.3 956.9 677.5 C959.5 684.3 962.2 698.0 964.8 709.3 C967.5 720.5 970.1 738.2 972.8 745.0 C974.1 748.4 975.4 751.4 976.7 751.4 C994.3 751.4 1011.8 751.4 1029.3 751.4" fill="none" stroke="#78d378" stroke-width="1"/><path d="M904.2 751.4 C904.2 751.4 904.2 675.5 904.2 675.5 C904.6 675.5 904.9 669.6 905.2 669.6 C906.6 669.6 907.9 711.1 909.2 721.2 C911.9 741.3 914.5 746.4 917.2 751.4 L917.2 752.2 L904.2 752.2 Z" fill="rgba(236,170,105,0.62)" stroke="none"/><path d="M929.1 751.4 C930.4 742.8 931.7 734.2 933.0 725.2 C935.0 711.6 937.0 682.5 939.0 682.5 C940.0 682.5 941.0 682.8 942.0 683.5 C943.6 684.6 945.3 703.7 946.9 713.3 C949.3 726.7 951.6 739.0 953.9 751.4 L953.9 752.2 L929.1 752.2 Z" fill="rgba(236,170,105,0.62)" stroke="none"/><path d="M897.8 756.2L903.7 746.0L909.6 756.2Z" fill="#e5973f"/><path d="M950.4 756.2L956.3 746.0L962.2 756.2Z" fill="#e5973f"/><path d="M945.6 643.4V778.4" stroke="#3b6a92" stroke-width="1.3"/><text x="945.6" y="655.6" font-size="10" fill="#2f6ca3" font-weight="bold" text-anchor="middle">RT Cor</text><text x="945.6" y="770.8" font-size="10" fill="#e3963f" font-weight="bold" text-anchor="middle">RT Cal</text><rect x="854.6" y="647" width="98.4" height="43" fill="rgba(255,255,255,0.62)"/><text x="856.2" y="658.8" font-size="10" fill="#2f6ca3" font-weight="bold" text-anchor="start">Q: 271.1 &gt; 159.15</text><text x="856.2" y="672.7" font-size="10" fill="#52c052" font-weight="normal" text-anchor="start">Q: 271.1 &gt; 131.05</text><text x="856.2" y="686.6" font-size="10" fill="#f5896f" font-weight="normal" text-anchor="start">Q: 271.1 &gt; 96.95</text><path d="M942.7 658.8L946.0 650.2L949.3 658.8Z" fill="#2f6ca3"/><circle cx="1020.8" cy="660.7" r="8.9" fill="none" stroke="#c40000" stroke-width="2"/><rect x="1019.8" y="655.3000000000001" width="2" height="6.4" fill="#c40000"/><rect x="1019.8" y="663.3000000000001" width="2" height="2.2" fill="#c40000"/><text x="1175.0" y="629.9" font-size="12" fill="#666" font-weight="bold" text-anchor="middle">Metazachlor 479 M16</text><path d="M1094.1 643.4H1288.3" stroke="#e2e2e2" stroke-width="1"/><text x="1093.7" y="646.9" font-size="11" fill="#616161" font-weight="normal" text-anchor="end" letter-spacing="0.6">1000.0</text><path d="M1094.1 711.3H1288.3" stroke="#e2e2e2" stroke-width="1"/><text x="1093.7" y="714.8" font-size="11" fill="#616161" font-weight="normal" text-anchor="end" letter-spacing="0.6">500.0</text><path d="M1094.1 778.4H1288.3" stroke="#e2e2e2" stroke-width="1"/><text x="1093.7" y="781.9" font-size="11" fill="#616161" font-weight="normal" text-anchor="end" letter-spacing="0.6">0.0</text><path d="M1094.1 778.4H1288.3" stroke="#e2e2e2" stroke-width="1"/><path d="M1160.6 643.4V788.9" stroke="#e2e2e2" stroke-width="1"/><path d="M1267.4 643.4V788.9" stroke="#e2e2e2" stroke-width="1"/><path d="M1103.6 643.4V788.9M1288.3 643.4V788.9" stroke="#e2e2e2" stroke-width="1"/><text x="1103.9" y="798.6" font-size="11" fill="#616161" font-weight="normal" text-anchor="middle" letter-spacing="0.6">1.2</text><text x="1160.9" y="798.6" font-size="11" fill="#616161" font-weight="normal" text-anchor="middle" letter-spacing="0.6">1.5</text><text x="1267.7" y="798.6" font-size="11" fill="#616161" font-weight="normal" text-anchor="middle" letter-spacing="0.6">2.0</text><text x="1288.6" y="798.6" font-size="11" fill="#616161" font-weight="normal" text-anchor="middle" letter-spacing="0.6">2.1</text><path d="M1094.1 778.4H1288.3" stroke="#b8b8b8" stroke-width="1.3"/><path d="M1112.2 778.4 C1114.3 774.9 1116.4 771.5 1118.5 768.9 C1120.5 766.4 1122.5 762.9 1124.5 762.9 C1125.8 762.9 1127.1 762.9 1128.4 762.9 C1130.1 762.9 1131.7 767.0 1133.4 769.8 C1134.7 772.1 1136.0 777.7 1137.4 777.8 C1144.7 778.2 1151.9 778.4 1159.2 778.4 C1160.5 778.4 1161.9 773.3 1163.2 770.8 C1164.6 768.1 1166.1 762.9 1167.6 762.9 C1169.1 762.9 1170.6 764.6 1172.1 766.9 C1173.8 769.4 1175.4 777.8 1177.1 777.8 C1179.4 777.8 1181.7 777.8 1184.0 777.8 C1185.4 777.8 1186.7 762.1 1188.0 749.0 C1189.3 735.9 1190.7 708.4 1192.0 699.4 C1193.4 689.4 1194.9 684.5 1196.3 684.5 C1197.3 684.5 1198.3 686.8 1199.3 691.4 C1200.8 698.5 1202.4 725.5 1203.9 739.1 C1205.5 753.8 1207.2 774.8 1208.9 774.8 C1209.8 774.8 1210.8 774.5 1211.8 773.8 C1213.8 772.5 1215.8 746.9 1217.8 741.1 C1218.8 738.1 1219.8 736.1 1220.8 736.1 C1222.8 736.1 1224.7 738.1 1226.7 738.1 C1228.7 738.1 1230.7 722.7 1232.7 717.2 C1233.8 714.1 1234.9 709.3 1236.1 709.3 C1237.3 709.3 1238.4 711.3 1239.6 711.3 C1240.6 711.3 1241.6 710.3 1242.6 708.3 C1243.6 706.3 1244.6 695.4 1245.6 693.4 C1246.6 691.4 1247.6 690.4 1248.6 690.4 C1249.9 690.4 1251.2 700.2 1252.5 709.3 C1254.5 722.9 1256.5 758.3 1258.5 768.9 C1259.7 775.2 1260.9 778.4 1262.1 778.4 C1267.8 778.4 1273.6 778.4 1279.3 778.4" fill="none" stroke="#78d378" stroke-width="1"/><path d="M1191.0 643.4V778.4" stroke="#3b6a92" stroke-width="1.3"/><text x="1191.0" y="655.6" font-size="10" fill="#2f6ca3" font-weight="bold" text-anchor="middle">RT Cor</text><text x="1191.0" y="770.8" font-size="10" fill="#e3963f" font-weight="bold" text-anchor="middle">RT Cal</text><rect x="1104.6" y="647" width="98.4" height="29" fill="rgba(255,255,255,0.62)"/><text x="1106.2" y="658.8" font-size="10" fill="#2f6ca3" font-weight="bold" text-anchor="start">Q: 380.2 &gt; 134.25</text><text x="1106.2" y="672.7" font-size="10" fill="#52c052" font-weight="normal" text-anchor="start">Q: 380.2 &gt; 312.05</text><path d="M1192.7 658.8L1196.0 650.2L1199.3 658.8Z" fill="#2f6ca3"/><path d="M1270.8 652.1L1281.0 669.5H1260.6Z" fill="none" stroke="#e3901c" stroke-width="2.1" stroke-linejoin="miter"/><rect x="1269.8" y="658.5" width="2" height="4.8" fill="#e3901c"/><rect x="1269.8" y="664.5" width="2" height="2" fill="#e3901c"/><text x="1425.0" y="629.9" font-size="12" fill="#666" font-weight="bold" text-anchor="middle">Methiocarbe-sulfoxide</text><path d="M1337.2 643.4H1538.3" stroke="#e2e2e2" stroke-width="1"/><text x="1336.8" y="646.9" font-size="11" fill="#616161" font-weight="normal" text-anchor="end" letter-spacing="0.6">600.0</text><path d="M1337.2 688.4H1538.3" stroke="#e2e2e2" stroke-width="1"/><text x="1336.8" y="691.9" font-size="11" fill="#616161" font-weight="normal" text-anchor="end" letter-spacing="0.6">400.0</text><path d="M1337.2 733.5H1538.3" stroke="#e2e2e2" stroke-width="1"/><text x="1336.8" y="737.0" font-size="11" fill="#616161" font-weight="normal" text-anchor="end" letter-spacing="0.6">200.0</text><path d="M1337.2 778.4H1538.3" stroke="#e2e2e2" stroke-width="1"/><text x="1336.8" y="781.9" font-size="11" fill="#616161" font-weight="normal" text-anchor="end" letter-spacing="0.6">0.0</text><path d="M1337.2 778.4H1538.3" stroke="#e2e2e2" stroke-width="1"/><path d="M1376.5 643.4V788.9" stroke="#e2e2e2" stroke-width="1"/><path d="M1420.1 643.4V788.9" stroke="#e2e2e2" stroke-width="1"/><path d="M1465.2 643.4V788.9" stroke="#e2e2e2" stroke-width="1"/><path d="M1510.5 643.4V788.9" stroke="#e2e2e2" stroke-width="1"/><path d="M1346.7 643.4V788.9M1538.3 643.4V788.9" stroke="#e2e2e2" stroke-width="1"/><text x="1347.0" y="798.6" font-size="11" fill="#616161" font-weight="normal" text-anchor="middle" letter-spacing="0.6">1.3</text><text x="1376.8" y="798.6" font-size="11" fill="#616161" font-weight="normal" text-anchor="middle" letter-spacing="0.6">1.4</text><text x="1420.4" y="798.6" font-size="11" fill="#616161" font-weight="normal" text-anchor="middle" letter-spacing="0.6">1.6</text><text x="1465.5" y="798.6" font-size="11" fill="#616161" font-weight="normal" text-anchor="middle" letter-spacing="0.6">1.8</text><text x="1510.8" y="798.6" font-size="11" fill="#616161" font-weight="normal" text-anchor="middle" letter-spacing="0.6">2.0</text><text x="1538.6" y="798.6" font-size="11" fill="#616161" font-weight="normal" text-anchor="middle" letter-spacing="0.6">2.1</text><path d="M1337.2 778.4H1538.3" stroke="#b8b8b8" stroke-width="1.3"/><path d="M1355.2 746.6 C1356.7 727.7 1358.1 708.9 1359.6 695.4 C1360.9 683.1 1362.2 670.2 1363.5 667.6 C1364.9 664.9 1366.2 663.6 1367.5 663.6 C1368.8 663.6 1370.2 673.9 1371.5 685.5 C1373.1 699.9 1374.8 745.7 1376.4 749.0 C1377.8 751.6 1379.1 753.0 1380.4 753.0 C1382.7 753.0 1385.1 716.8 1387.4 703.3 C1389.4 691.8 1391.3 683.5 1393.3 675.5 C1395.3 667.6 1397.3 662.2 1399.3 655.7 C1400.5 651.8 1401.7 644.2 1402.9 644.2 C1404.3 644.2 1405.8 653.5 1407.2 661.6 C1408.6 669.0 1409.9 680.9 1411.2 689.4 C1412.2 695.8 1413.2 704.8 1414.2 707.3 C1415.5 710.6 1416.8 712.3 1418.1 712.3 C1419.8 712.3 1421.5 703.3 1423.1 697.4 C1424.4 692.7 1425.8 681.5 1427.1 681.5 C1429.1 681.5 1431.1 687.6 1433.0 689.4 C1435.0 691.2 1437.0 690.4 1439.0 692.4 C1440.3 693.7 1441.6 696.4 1443.0 699.4 C1444.6 703.0 1446.3 713.3 1447.9 713.3 C1449.9 713.3 1451.9 707.3 1453.9 707.3 C1455.5 707.3 1457.2 710.6 1458.9 717.2 C1459.8 721.2 1460.8 731.5 1461.8 739.1 C1463.2 749.2 1464.5 764.4 1465.8 770.8 C1466.8 775.7 1467.8 778.4 1468.8 778.4 C1472.1 778.4 1475.4 778.4 1478.7 778.4 C1480.0 778.4 1481.4 770.8 1482.7 764.9 C1484.7 756.1 1486.7 738.9 1488.6 729.1 C1490.3 721.0 1492.0 714.6 1493.6 709.3 C1495.3 704.0 1496.9 701.4 1498.6 697.4 C1500.9 691.8 1503.2 680.5 1505.5 680.5 C1506.8 680.5 1508.2 686.0 1509.5 693.4 C1510.8 700.8 1512.1 715.5 1513.5 725.2 C1515.1 737.2 1516.8 756.9 1518.4 756.9 C1520.4 756.9 1522.4 754.3 1524.4 749.0 C1526.2 744.1 1528.1 733.1 1529.9 722.2" fill="none" stroke="#f5937d" stroke-width="1"/><path d="M1355.2 777.8 C1358.0 778.1 1360.8 778.4 1363.5 778.4 C1364.9 778.4 1366.2 775.5 1367.5 770.8 C1369.5 763.8 1371.5 744.4 1373.5 735.1 C1375.6 725.2 1377.7 714.2 1379.8 714.2 C1381.3 714.2 1382.9 728.2 1384.4 737.1 C1386.4 748.7 1388.4 778.4 1390.3 778.4 C1391.7 778.4 1393.0 778.2 1394.3 777.8 C1397.3 776.9 1400.3 766.9 1403.3 766.9 C1405.9 766.9 1408.6 777.8 1411.2 777.8 C1413.8 777.8 1416.5 777.8 1419.1 777.8 C1421.1 777.8 1423.1 761.4 1425.1 749.0 C1427.1 736.6 1429.1 716.9 1431.1 703.3 C1433.0 689.8 1435.0 667.6 1437.0 667.6 C1438.3 667.6 1439.7 670.2 1441.0 675.5 C1442.6 682.1 1444.3 712.0 1445.9 729.1 C1447.6 746.3 1449.3 778.4 1450.9 778.4 C1458.9 778.4 1466.8 778.4 1474.7 778.4 C1476.4 778.4 1478.1 773.9 1479.7 764.9 C1481.0 757.7 1482.4 731.6 1483.7 721.2 C1485.0 710.8 1486.3 702.3 1487.6 702.3 C1489.3 702.3 1491.0 711.3 1492.6 721.2 C1494.6 733.1 1496.6 765.4 1498.6 772.8 C1499.6 776.5 1500.6 778.4 1501.5 778.4 C1510.8 778.4 1520.1 778.4 1529.3 778.4" fill="none" stroke="#78d378" stroke-width="1"/><path d="M1449.3 643.4V778.4" stroke="#3b6a92" stroke-width="1.3"/><text x="1449.3" y="655.6" font-size="10" fill="#2f6ca3" font-weight="bold" text-anchor="middle">RT Cor</text><text x="1449.3" y="770.8" font-size="10" fill="#e3963f" font-weight="bold" text-anchor="middle">RT Cal</text><rect x="1347.7" y="647" width="99.3" height="43" fill="rgba(255,255,255,0.62)"/><text x="1356.2" y="658.8" font-size="10" fill="#2f6ca3" font-weight="bold" text-anchor="start">Q: 242.1 &gt; 185.2</text><text x="1356.2" y="672.7" font-size="10" fill="#52c052" font-weight="normal" text-anchor="start">Q: 242.1 &gt; 107.05</text><text x="1356.2" y="686.6" font-size="10" fill="#f5896f" font-weight="normal" text-anchor="start">Q: 242.1 &gt; 77.15</text><path d="M1436.7 658.8L1440.0 650.2L1443.3 658.8Z" fill="#2f6ca3"/><path d="M1520.8 652.1L1531.0 669.5H1510.6Z" fill="none" stroke="#e3901c" stroke-width="2.1" stroke-linejoin="miter"/><rect x="1519.8" y="658.5" width="2" height="4.8" fill="#e3901c"/><rect x="1519.8" y="664.5" width="2" height="2" fill="#e3901c"/><text x="425.0" y="829.9" font-size="12" fill="#666" font-weight="bold" text-anchor="middle">Metaldehyde</text><path d="M337.1 843.6H538.7" stroke="#e2e2e2" stroke-width="1"/><text x="336.7" y="847.1" font-size="11" fill="#616161" font-weight="normal" text-anchor="end" letter-spacing="0.6">300.0</text><path d="M337.1 888.3H538.7" stroke="#e2e2e2" stroke-width="1"/><text x="336.7" y="891.8" font-size="11" fill="#616161" font-weight="normal" text-anchor="end" letter-spacing="0.6">200.0</text><path d="M337.1 933.2H538.7" stroke="#e2e2e2" stroke-width="1"/><text x="336.7" y="936.7" font-size="11" fill="#616161" font-weight="normal" text-anchor="end" letter-spacing="0.6">100.0</text><path d="M337.1 977.9H538.7" stroke="#e2e2e2" stroke-width="1"/><text x="336.7" y="981.4" font-size="11" fill="#616161" font-weight="normal" text-anchor="end" letter-spacing="0.6">0.0</text><path d="M337.1 977.9H538.7" stroke="#e2e2e2" stroke-width="1"/><path d="M385.8 843.6V988.4" stroke="#e2e2e2" stroke-width="1"/><path d="M429.8 843.6V988.4" stroke="#e2e2e2" stroke-width="1"/><path d="M473.2 843.6V988.4" stroke="#e2e2e2" stroke-width="1"/><path d="M518.9 843.6V988.4" stroke="#e2e2e2" stroke-width="1"/><path d="M346.6 843.6V988.4M538.7 843.6V988.4" stroke="#e2e2e2" stroke-width="1"/><path d="M337.1 977.9H538.7" stroke="#b8b8b8" stroke-width="1.3"/><path d="M354.7 977.9 L530.2 977.9" fill="none" stroke="#5a90c4" stroke-width="1"/><path d="M354.7 977.9 C377.4 977.9 400.0 977.9 422.6 977.9 C424.5 977.9 426.4 955.9 428.3 942.1 C430.2 928.2 432.1 905.3 434.0 894.9 C435.5 886.3 437.1 880.2 438.7 880.2 C440.3 880.2 441.8 890.4 443.4 900.6 C445.3 912.7 447.2 938.6 449.1 951.5 C450.9 964.4 452.8 977.9 454.7 977.9 C479.9 977.9 505.0 977.9 530.2 977.9" fill="none" stroke="#78d378" stroke-width="1"/><path d="M440.9 843.6V977.9" stroke="#3b6a92" stroke-width="1.3"/><text x="440.9" y="855.6" font-size="10" fill="#2f6ca3" font-weight="bold" text-anchor="middle">RT Cor</text><text x="440.9" y="970.8" font-size="10" fill="#e3963f" font-weight="bold" text-anchor="middle">RT Cal</text><rect x="347.6" y="847" width="93.6" height="29" fill="rgba(255,255,255,0.62)"/><text x="356.2" y="858.8" font-size="10" fill="#2f6ca3" font-weight="bold" text-anchor="start">Q: 194.1 &gt; 62.3</text><text x="356.2" y="872.7" font-size="10" fill="#52c052" font-weight="normal" text-anchor="start">Q: 194.1 &gt; 106.3</text><path d="M430.9 858.8L434.2 850.2L437.5 858.8Z" fill="#2f6ca3"/><path d="M520.8 852.1L531.0 869.5H510.6Z" fill="none" stroke="#e3901c" stroke-width="2.1" stroke-linejoin="miter"/><rect x="519.8" y="858.5" width="2" height="4.8" fill="#e3901c"/><rect x="519.8" y="864.5" width="2" height="2" fill="#e3901c"/><text x="675.0" y="829.9" font-size="12" fill="#666" font-weight="bold" text-anchor="middle">Fenthion-oxon-sulfoxide</text><path d="M587.1 843.6H788.7" stroke="#e2e2e2" stroke-width="1"/><text x="586.7" y="847.1" font-size="11" fill="#616161" font-weight="normal" text-anchor="end" letter-spacing="0.6">300.0</text><path d="M587.1 888.3H788.7" stroke="#e2e2e2" stroke-width="1"/><text x="586.7" y="891.8" font-size="11" fill="#616161" font-weight="normal" text-anchor="end" letter-spacing="0.6">200.0</text><path d="M587.1 933.2H788.7" stroke="#e2e2e2" stroke-width="1"/><text x="586.7" y="936.7" font-size="11" fill="#616161" font-weight="normal" text-anchor="end" letter-spacing="0.6">100.0</text><path d="M587.1 977.9H788.7" stroke="#e2e2e2" stroke-width="1"/><text x="586.7" y="981.4" font-size="11" fill="#616161" font-weight="normal" text-anchor="end" letter-spacing="0.6">0.0</text><path d="M587.1 977.9H788.7" stroke="#e2e2e2" stroke-width="1"/><path d="M617.4 843.6V988.4" stroke="#e2e2e2" stroke-width="1"/><path d="M662.3 843.6V988.4" stroke="#e2e2e2" stroke-width="1"/><path d="M706.6 843.6V988.4" stroke="#e2e2e2" stroke-width="1"/><path d="M751.5 843.6V988.4" stroke="#e2e2e2" stroke-width="1"/><path d="M596.6 843.6V988.4M788.7 843.6V988.4" stroke="#e2e2e2" stroke-width="1"/><path d="M587.1 977.9H788.7" stroke="#b8b8b8" stroke-width="1.3"/><path d="M604.7 977.9 L780.2 977.9" fill="none" stroke="#5a90c4" stroke-width="1"/><path d="M604.7 977.9 C621.7 977.9 638.7 977.9 655.7 977.9 C656.9 977.9 658.2 971.0 659.4 957.2 C660.7 943.3 661.9 909.1 663.2 894.9 C664.2 884.3 665.1 874.2 666.0 874.2 C667.0 874.2 667.9 874.2 668.9 874.2 C669.8 874.2 670.8 883.2 671.7 894.9 C672.8 908.2 673.8 938.9 674.9 953.4 C675.7 964.5 676.5 977.9 677.4 977.9 C711.6 977.9 745.9 977.9 780.2 977.9" fill="none" stroke="#78d378" stroke-width="1"/><path d="M676.8 843.6V977.9" stroke="#3b6a92" stroke-width="1.3"/><text x="676.8" y="855.6" font-size="10" fill="#2f6ca3" font-weight="bold" text-anchor="middle">RT Cor</text><text x="676.8" y="970.8" font-size="10" fill="#e3963f" font-weight="bold" text-anchor="middle">RT Cal</text><rect x="597.6" y="847" width="105.4" height="29" fill="rgba(255,255,255,0.62)"/><text x="606.2" y="858.8" font-size="10" fill="#2f6ca3" font-weight="bold" text-anchor="start">Q: 279.1 &gt; 264.05</text><text x="606.2" y="872.7" font-size="10" fill="#52c052" font-weight="normal" text-anchor="start">Q: 279.1 &gt; 104.05</text><path d="M692.7 858.8L696.0 850.2L699.3 858.8Z" fill="#2f6ca3"/><circle cx="770.8" cy="860.7" r="8.9" fill="none" stroke="#c40000" stroke-width="2"/><rect x="769.8" y="855.3000000000001" width="2" height="6.4" fill="#c40000"/><rect x="769.8" y="863.3000000000001" width="2" height="2.2" fill="#c40000"/><text x="925.0" y="829.9" font-size="12" fill="#666" font-weight="bold" text-anchor="middle">Sulfoxaflor</text><path d="M843.9 843.6H1038.7" stroke="#e2e2e2" stroke-width="1"/><text x="843.5" y="847.1" font-size="11" fill="#616161" font-weight="normal" text-anchor="end" letter-spacing="0.6">1000.0</text><path d="M843.9 908.1H1038.7" stroke="#e2e2e2" stroke-width="1"/><text x="843.5" y="911.6" font-size="11" fill="#616161" font-weight="normal" text-anchor="end" letter-spacing="0.6">500.0</text><path d="M843.9 973.2H1038.7" stroke="#e2e2e2" stroke-width="1"/><text x="843.5" y="976.7" font-size="11" fill="#616161" font-weight="normal" text-anchor="end" letter-spacing="0.6">0.0</text><path d="M843.9 977.9H1038.7" stroke="#e2e2e2" stroke-width="1"/><path d="M903.4 843.6V988.4" stroke="#e2e2e2" stroke-width="1"/><path d="M1010.4 843.6V988.4" stroke="#e2e2e2" stroke-width="1"/><path d="M853.4 843.6V988.4M1038.7 843.6V988.4" stroke="#e2e2e2" stroke-width="1"/><path d="M843.9 973.2H1038.7" stroke="#b8b8b8" stroke-width="1.3"/><path d="M862.3 973.2 C880.5 973.2 898.7 973.2 917.0 973.2 C918.9 973.2 920.8 964.1 922.6 960.9 C924.5 957.8 926.4 954.3 928.3 954.3 C930.2 954.3 932.1 959.7 934.0 962.8 C935.8 966.0 937.7 973.2 939.6 973.2 C950.3 973.2 961.0 973.2 971.7 973.2 C973.9 973.2 976.1 965.7 978.3 965.7 C980.8 965.7 983.3 973.2 985.8 973.2 C1000.5 973.2 1015.2 973.2 1029.8 973.2" fill="none" stroke="#5a90c4" stroke-width="1"/><path d="M862.3 973.2 C876.7 973.2 891.2 973.2 905.7 973.2 C908.2 973.2 910.7 966.6 913.2 953.4 C915.1 943.5 917.0 922.9 918.9 911.9 C921.3 897.9 923.6 883.6 926.0 883.6 C928.1 883.6 930.1 902.5 932.1 915.7 C934.0 928.0 935.8 959.1 937.7 959.1 C939.6 959.1 941.5 950.4 943.4 942.1 C945.3 933.7 947.2 909.1 949.1 909.1 C950.9 909.1 952.8 922.6 954.7 930.8 C957.2 941.7 959.7 964.3 962.3 968.5 C964.2 971.6 966.0 973.2 967.9 973.2 C969.8 973.2 971.7 972.6 973.6 971.3 C975.2 970.3 976.7 963.1 978.3 959.1 C979.9 955.1 981.4 947.4 983.0 947.4 C984.9 947.4 986.8 963.6 988.7 968.5 C989.3 970.1 989.9 972.6 990.6 972.6 C992.5 972.6 994.3 960.0 996.2 960.0 C997.8 960.0 999.4 973.2 1000.9 973.2 C1003.1 973.2 1005.3 972.9 1007.5 972.3 C1010.1 971.5 1012.6 935.5 1015.1 935.5 C1016.7 935.5 1018.2 949.6 1019.8 949.6 C1022.0 949.6 1024.2 919.4 1026.4 919.4 C1027.5 919.4 1028.7 920.4 1029.8 921.3" fill="none" stroke="#78d378" stroke-width="1"/><path d="M917.0 973.2 C918.9 968.6 920.8 964.1 922.6 960.9 C924.5 957.8 926.4 954.3 928.3 954.3 C930.2 954.3 932.1 959.7 934.0 962.8 C935.8 966.0 937.7 969.6 939.6 973.2 L939.6 973.2 L917.0 973.2 Z" fill="rgba(236,170,105,0.62)" stroke="none"/><path d="M909.2 977.2L915.1 967.0L921.0 977.2Z" fill="rgba(236,170,105,0.75)"/><path d="M933.7 977.2L939.6 967.0L945.5 977.2Z" fill="rgba(236,170,105,0.75)"/><path d="M925.5 843.6V977.9" stroke="#3b6a92" stroke-width="1.3"/><text x="925.5" y="855.6" font-size="10" fill="#2f6ca3" font-weight="bold" text-anchor="middle">RT Cor</text><text x="925.5" y="970.8" font-size="10" fill="#e3963f" font-weight="bold" text-anchor="middle">RT Cal</text><rect x="854.4" y="847" width="98.6" height="29" fill="rgba(255,255,255,0.62)"/><text x="856.2" y="858.8" font-size="10" fill="#2f6ca3" font-weight="bold" text-anchor="start">Q: 295.1 &gt; 174.15</text><text x="856.2" y="872.7" font-size="10" fill="#52c052" font-weight="normal" text-anchor="start">Q: 295.1 &gt; 277.9</text><path d="M942.7 858.8L946.0 850.2L949.3 858.8Z" fill="#2f6ca3"/><path d="M1020.8 852.1L1031.0 869.5H1010.6Z" fill="none" stroke="#e3901c" stroke-width="2.1" stroke-linejoin="miter"/><rect x="1019.8" y="858.5" width="2" height="4.8" fill="#e3901c"/><rect x="1019.8" y="864.5" width="2" height="2" fill="#e3901c"/><text x="1175.0" y="829.9" font-size="12" fill="#666" font-weight="bold" text-anchor="middle">Phorate-oxon-sulfone</text><path d="M1093.9 843.6H1288.7" stroke="#e2e2e2" stroke-width="1"/><text x="1093.5" y="847.1" font-size="11" fill="#616161" font-weight="normal" text-anchor="end" letter-spacing="0.6">1000.0</text><path d="M1093.9 898.3H1288.7" stroke="#e2e2e2" stroke-width="1"/><text x="1093.5" y="901.8" font-size="11" fill="#616161" font-weight="normal" text-anchor="end" letter-spacing="0.6">500.0</text><path d="M1093.9 954.3H1288.7" stroke="#e2e2e2" stroke-width="1"/><text x="1093.5" y="957.8" font-size="11" fill="#616161" font-weight="normal" text-anchor="end" letter-spacing="0.6">0.0</text><path d="M1093.9 977.9H1288.7" stroke="#e2e2e2" stroke-width="1"/><path d="M1125.5 843.6V988.4" stroke="#e2e2e2" stroke-width="1"/><path d="M1231.5 843.6V988.4" stroke="#e2e2e2" stroke-width="1"/><path d="M1103.4 843.6V988.4M1288.7 843.6V988.4" stroke="#e2e2e2" stroke-width="1"/><path d="M1093.9 954.3H1288.7" stroke="#b8b8b8" stroke-width="1.3"/><path d="M1112.3 954.3 C1153.8 954.3 1195.3 954.3 1236.8 954.3 C1238.7 954.3 1240.6 943.0 1242.5 943.0 C1244.0 943.0 1245.6 945.8 1247.2 947.7 C1248.7 949.6 1250.3 954.3 1251.9 954.3 C1253.5 954.3 1255.0 948.9 1256.6 945.8 C1257.9 943.4 1259.1 938.3 1260.4 938.3 C1262.3 938.3 1264.2 954.3 1266.0 954.3 C1270.6 954.3 1275.2 954.3 1279.8 954.3" fill="none" stroke="#78d378" stroke-width="1"/><path d="M1112.3 954.3 C1126.7 954.3 1141.2 954.3 1155.7 954.3 C1158.2 954.3 1160.7 948.7 1163.2 948.7 C1165.1 948.7 1167.0 950.6 1168.9 950.6 C1171.5 950.6 1174.2 943.6 1176.8 943.6 C1178.6 943.6 1180.3 945.8 1182.1 947.7 C1183.6 949.5 1185.2 954.3 1186.8 954.3 C1203.5 954.3 1220.1 954.3 1236.8 954.3 C1238.1 954.3 1239.3 950.3 1240.6 942.1 C1241.8 933.9 1243.1 906.5 1244.3 894.9 C1245.6 883.3 1246.9 872.3 1248.1 872.3 C1249.1 872.3 1250.0 874.2 1250.9 877.9 C1252.2 883.0 1253.5 899.5 1254.7 908.1 C1255.7 914.6 1256.6 921.0 1257.5 925.1 C1258.5 929.2 1259.4 929.4 1260.4 932.6 C1261.9 938.0 1263.5 954.3 1265.1 954.3 C1270.0 954.3 1274.9 954.3 1279.8 954.3" fill="none" stroke="#5a90c4" stroke-width="1"/><path d="M1236.8 954.3 C1238.1 952.3 1239.3 950.3 1240.6 942.1 C1241.8 933.9 1243.1 906.5 1244.3 894.9 C1245.6 883.3 1246.9 872.3 1248.1 872.3 C1249.1 872.3 1250.0 874.2 1250.9 877.9 C1252.2 883.0 1253.5 899.5 1254.7 908.1 C1255.7 914.6 1256.6 921.0 1257.5 925.1 C1258.5 929.2 1259.4 929.4 1260.4 932.6 C1261.9 938.0 1263.5 946.2 1265.1 954.3 L1265.1 954.3 L1236.8 954.3 Z" fill="rgba(236,170,105,0.62)" stroke="none"/><path d="M1229.0 957.5L1234.9 947.3L1240.8 957.5Z" fill="#e5973f"/><path d="M1262.0 957.5L1267.9 947.3L1273.8 957.5Z" fill="#e5973f"/><path d="M1237.4 843.6V977.9" stroke="#3b6a92" stroke-width="1.3"/><text x="1237.4" y="855.6" font-size="10" fill="#2f6ca3" font-weight="bold" text-anchor="middle">RT Cor</text><text x="1237.4" y="970.8" font-size="10" fill="#e3963f" font-weight="bold" text-anchor="middle">RT Cal</text><rect x="1104.4" y="847" width="92.7" height="29" fill="rgba(255,255,255,0.62)"/><text x="1106.2" y="858.8" font-size="10" fill="#2f6ca3" font-weight="bold" text-anchor="start">Q: 276.9 &gt; 126.8</text><text x="1106.2" y="872.7" font-size="10" fill="#52c052" font-weight="normal" text-anchor="start">Q: 276.9 &gt; 111</text><path d="M1186.8 858.8L1190.1 850.2L1193.4 858.8Z" fill="#2f6ca3"/><circle cx="1270.8" cy="860.7" r="8.9" fill="none" stroke="#c40000" stroke-width="2"/><rect x="1269.8" y="855.3000000000001" width="2" height="6.4" fill="#c40000"/><rect x="1269.8" y="863.3000000000001" width="2" height="2.2" fill="#c40000"/><text x="1425.0" y="829.9" font-size="12" fill="#666" font-weight="bold" text-anchor="middle">Thiadone</text><path d="M1337.1 843.6H1538.7" stroke="#e2e2e2" stroke-width="1"/><text x="1336.7" y="847.1" font-size="11" fill="#616161" font-weight="normal" text-anchor="end" letter-spacing="0.6">400.0</text><path d="M1337.1 906.2H1538.7" stroke="#e2e2e2" stroke-width="1"/><text x="1336.7" y="909.7" font-size="11" fill="#616161" font-weight="normal" text-anchor="end" letter-spacing="0.6">200.0</text><path d="M1337.1 968.5H1538.7" stroke="#e2e2e2" stroke-width="1"/><text x="1336.7" y="972.0" font-size="11" fill="#616161" font-weight="normal" text-anchor="end" letter-spacing="0.6">0.0</text><path d="M1337.1 977.9H1538.7" stroke="#e2e2e2" stroke-width="1"/><path d="M1372.3 843.6V988.4" stroke="#e2e2e2" stroke-width="1"/><path d="M1415.5 843.6V988.4" stroke="#e2e2e2" stroke-width="1"/><path d="M1459.4 843.6V988.4" stroke="#e2e2e2" stroke-width="1"/><path d="M1503.4 843.6V988.4" stroke="#e2e2e2" stroke-width="1"/><path d="M1346.6 843.6V988.4M1538.7 843.6V988.4" stroke="#e2e2e2" stroke-width="1"/><path d="M1337.1 968.5H1538.7" stroke="#b8b8b8" stroke-width="1.3"/><path d="M1354.7 968.5 C1370.4 968.5 1386.2 968.5 1401.9 968.5 C1402.8 968.5 1403.8 934.5 1404.7 934.5 C1405.7 934.5 1406.6 968.5 1407.5 968.5 C1448.3 968.5 1489.1 968.5 1529.8 968.5" fill="none" stroke="#5a90c4" stroke-width="1"/><path d="M1354.7 968.5 C1368.9 968.5 1383.0 968.5 1397.2 968.5 C1398.4 968.5 1399.7 894.0 1400.9 894.0 C1402.0 894.0 1403.1 968.5 1404.2 968.5 C1446.1 968.5 1488.1 968.5 1530.0 968.5" fill="none" stroke="#78d378" stroke-width="1"/><path d="M1397.2 968.5 C1399.2 966.0 1401.3 963.5 1403.4 953.4 C1403.8 951.3 1404.3 934.5 1404.7 934.5 C1405.2 934.5 1405.6 951.5 1406.0 953.4 C1408.4 963.5 1410.8 966.0 1413.2 968.5 L1413.2 968.5 L1397.2 968.5 Z" fill="rgba(236,170,105,0.62)" stroke="none"/><path d="M1407.5 843.6V977.9" stroke="#3b6a92" stroke-width="1.3"/><text x="1407.5" y="855.6" font-size="10" fill="#2f6ca3" font-weight="bold" text-anchor="middle">RT Cor</text><text x="1407.5" y="970.8" font-size="10" fill="#e3963f" font-weight="bold" text-anchor="middle">RT Cal</text><rect x="1347.6" y="847" width="99.5" height="29" fill="rgba(255,255,255,0.62)"/><text x="1356.2" y="858.8" font-size="10" fill="#2f6ca3" font-weight="bold" text-anchor="start">Q: 169.4 &gt; 113.1</text><text x="1356.2" y="872.7" font-size="10" fill="#52c052" font-weight="normal" text-anchor="start">Q: 169.4 &gt; 109.1</text><path d="M1436.8 858.8L1440.1 850.2L1443.4 858.8Z" fill="#2f6ca3"/><circle cx="1520.8" cy="860.7" r="8.9" fill="none" stroke="#c40000" stroke-width="2"/><rect x="1519.8" y="855.3000000000001" width="2" height="6.4" fill="#c40000"/><rect x="1519.8" y="863.3000000000001" width="2" height="2.2" fill="#c40000"/></g></svg>
<div class="a" style="left:276px;top:627px;width:2px;height:334px;background:#9cbcd6"></div>
<div class="a" style="left:271px;top:888px;width:12px;height:12px;border-radius:50%;background:#175c8f"></div>
<div class="a" style="left:1734px;top:609px;width:10px;height:86px;border-radius:5px;background:#b3b3b3"></div>
<div class="a" style="left:1756px;top:802px;width:5px;height:5px;border-radius:50%;background:#c4c4c4"></div>
<div class="t" style="left:1782.2px;top:774.28px;font-size:24px;color:#175c8f;font-weight:normal;letter-spacing:-0.5px;">No item ...</div>
<svg style="left:1818px;top:802px;" width="40" height="40" viewBox="0 0 24 24"><path fill="#175c8f" d="M3 5h2V3c-1.1 0-2 .9-2 2zm0 8h2v-2H3v2zm4 8h2v-2H7v2zM3 9h2V7H3v2zm10-6h-2v2h2V3zm6 0v2h2c0-1.1-.9-2-2-2zM5 21v-2H3c0 1.1.9 2 2 2zm-2-4h2v-2H3v2zM9 3H7v2h2V3zm2 18h2v-2h-2v2zm8-8h2v-2h-2v2zm0 8c1.1 0 2-.9 2-2h-2v2zm0-12h2V7h-2v2zm0 8h2v-2h-2v2zm-4 4h2v-2h-2v2zm0-16h2V3h-2v2zM7 17h10V7H7v10zm2-8h6v6H9V9z"/></svg>
</body></html>
